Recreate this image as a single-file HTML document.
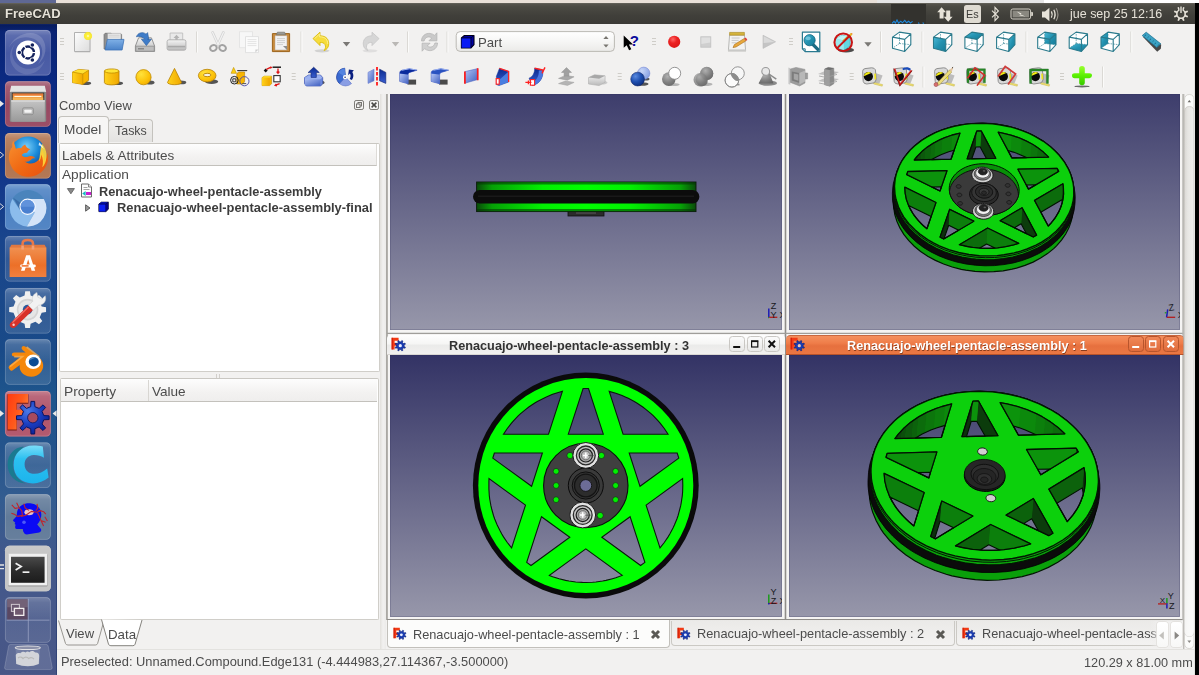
<!DOCTYPE html>
<html lang="es"><head><meta charset="utf-8"><title>FreeCAD</title>
<style>
*{box-sizing:border-box;margin:0;padding:0}
html,body{width:1199px;height:675px;overflow:hidden;background:#f2f1f0}
body{position:relative;font-family:"Liberation Sans","DejaVu Sans",sans-serif;font-size:13px;color:#4c4c4c}
.a{position:absolute}
.t{position:absolute;white-space:nowrap;line-height:1;transform-origin:0 0}
svg{position:absolute;overflow:visible}
#strip{left:0;top:0;width:1199px;height:4px;background:#e9e0d8}
#panel{left:0;top:3.4px;width:1195px;height:20.6px;background:linear-gradient(#6a685f 0,#54524b 6%,#4b4a43 18%,#403f3a 60%,#3b3a36 100%)}
#rblack{left:1195px;top:3.4px;width:4px;height:672px;background:#000}
#win{left:57px;top:24px;width:1138px;height:651px;background:#f2f1f0}

</style></head>
<body>
<div class="a" id="strip"><div class="a" style="left:0;top:0;width:56px;height:4px;background:#5f6894"></div><div class="a" style="left:877px;top:0;width:167px;height:4px;background:#e6e6e6"></div><div class="a" style="left:1044px;top:0;width:155px;height:4px;background:#fff"></div></div>
<div class="a" id="panel"></div>
<div class="a" id="rblack"></div>
<div class="a" id="win"></div>
<span class="t" style="left:5.26px;top:9.00px;font-size:11.9px;font-weight:700;color:#e6e2d8;transform:scaleX(1.0922);text-shadow:0 0.6px 0.8px #22211e">FreeCAD</span>
<div class="a" style="left:891px;top:4px;width:35px;height:20px;background:#33322e;"></div>
<svg style="left:891px;top:18px" width="36" height="6" viewBox="0 0 36 6"><path d="M1 5.400l2-2 1.400 1.600 1.600-3 1.600 3.200 2.200-2 1.600 1.600 2.400-2.400 1.800 2.400 2-1.600 1.800 1.800 2.200-1.600M27 4.800l1.400 0.600M31.600 4.800l1.400 0.600" fill="none" stroke="#1c8ae0" stroke-width="1.100"/></svg>
<svg style="left:936px;top:6px" width="18" height="17" viewBox="0 0 18 17"><path d="M5.600 1.200l4.400 5h-2.400v6.200h-4v-6.200h-2.400z" fill="#e6e2d8"/><path d="M12.200 15.800l-4.400-5h2.400v-6.200h4v6.200h2.400z" fill="#e6e2d8"/></svg>
<div class="a" style="left:963.8px;top:5.4px;width:17.4px;height:17.4px;background:#dfdbd2;border-radius:2.500px"></div>
<span class="t" style="left:965.93px;top:9.00px;font-size:11.8px;color:#3c3b37;transform:scaleX(0.9201);">Es</span>
<svg style="left:990px;top:6px" width="11" height="17" viewBox="0 0 11 17"><path d="M2 4.600l6.400 6.400-3.400 3.600v-13.200l3.400 3.600-6.400 6.400" fill="none" stroke="#e6e2d8" stroke-width="1.100"/></svg>
<svg style="left:1010px;top:8px" width="24" height="12" viewBox="0 0 24 12"><rect x="1" y="1" width="19.600" height="10" rx="1.800" fill="none" stroke="#d8d4ca" stroke-width="1"/><path d="M21.200 4h1q0.800 0 0.800 0.800v2.400q0 0.800-0.800 0.800h-1z" fill="#d8d4ca"/><rect x="2.600" y="2.600" width="16.400" height="6.800" fill="#8a8880"/><path d="M6.600 3.400l5 2.200-1.400 0.600 5.200 2.400-6.200-1.400 1.400-0.800z" fill="#f4f0e6"/></svg>
<svg style="left:1041px;top:6px" width="20" height="17" viewBox="0 0 20 17"><path d="M1 5.600h3l4.400-3.800v13.400l-4.400-3.800h-3z" fill="#e6e2d8"/><path d="M10.400 5.400q1.600 3.100 0 6.200M12.800 3.800q2.600 4.700 0 9.400" fill="none" stroke="#e6e2d8" stroke-width="1.300"/><path d="M15.200 2.200q3.400 6.300 0 12.600" fill="none" stroke="#9a968e" stroke-width="1.100"/></svg>
<span class="t" style="left:1070.11px;top:8.00px;font-size:12.4px;color:#e6e2d8;transform:scaleX(1.0075);">jue sep 25 12:16</span>
<svg style="left:1172.600px;top:6px" width="16" height="16" viewBox="0 0 16 16"><path d="M8.98 3.10L10.06 0.89L11.56 1.52L10.78 3.84L12.16 5.22L14.48 4.44L15.11 5.94L12.90 7.02L12.90 8.98L15.11 10.06L14.48 11.56L12.16 10.78L10.78 12.16L11.56 14.48L10.06 15.11L8.98 12.90L7.02 12.90L5.94 15.11L4.44 14.48L5.22 12.16L3.84 10.78L1.52 11.56L0.89 10.06L3.10 8.98L3.10 7.02L0.89 5.94L1.52 4.44L3.84 5.22L5.22 3.84L4.44 1.52L5.94 0.89L7.02 3.10Z" fill="#e6e2d8"/><circle cx="8" cy="8" r="3.400" fill="#45443e"/><path d="M8 0.400v7" stroke="#45443e" stroke-width="3"/><path d="M8 0.600v6.400" stroke="#e6e2d8" stroke-width="1.400"/></svg>
<svg style="left:0;top:24px;overflow:hidden" width="56.6" height="651" viewBox="0 24 56.6 651">
<defs><linearGradient id="lbg" gradientUnits="userSpaceOnUse" x1="0" y1="24" x2="0" y2="675"><stop offset="0" stop-color="#061a5c"/><stop offset="0.012" stop-color="#0a2474"/><stop offset="0.09" stop-color="#0b2a82"/><stop offset="0.17" stop-color="#0c3088"/><stop offset="0.25" stop-color="#13398a"/><stop offset="0.33" stop-color="#19458c"/><stop offset="0.42" stop-color="#1a488a"/><stop offset="0.5" stop-color="#194a88"/><stop offset="0.57" stop-color="#1e558c"/><stop offset="0.65" stop-color="#24548c"/><stop offset="0.73" stop-color="#335c90"/><stop offset="0.81" stop-color="#40588c"/><stop offset="0.89" stop-color="#46588a"/><stop offset="1" stop-color="#485686"/></linearGradient><linearGradient id="ltile" x1="0" y1="0" x2="0" y2="1"><stop offset="0" stop-color="#fff" stop-opacity="0.34"/><stop offset="0.12" stop-color="#fff" stop-opacity="0.2"/><stop offset="0.5" stop-color="#fff" stop-opacity="0.1"/><stop offset="1" stop-color="#fff" stop-opacity="0.13"/></linearGradient><linearGradient id="lsheen" x1="0" y1="0" x2="0" y2="1"><stop offset="0" stop-color="#fff" stop-opacity="0.4"/><stop offset="0.15" stop-color="#fff" stop-opacity="0.15"/><stop offset="0.5" stop-color="#fff" stop-opacity="0"/></linearGradient><radialGradient id="lffb" cx="0.45" cy="0.3" r="0.75"><stop offset="0" stop-color="#7ad0f8"/><stop offset="0.45" stop-color="#1a8ad8"/><stop offset="1" stop-color="#0a2a80"/></radialGradient><linearGradient id="lffo" x1="0" y1="0" x2="1" y2="1"><stop offset="0" stop-color="#f89030"/><stop offset="0.5" stop-color="#f06a14"/><stop offset="1" stop-color="#e85010"/></linearGradient><linearGradient id="lbag" x1="0" y1="0" x2="0" y2="1"><stop offset="0" stop-color="#f09050"/><stop offset="0.6" stop-color="#ec7028"/><stop offset="1" stop-color="#f08040"/></linearGradient><linearGradient id="lterm" x1="0" y1="0" x2="0" y2="1"><stop offset="0" stop-color="#4a4a4a"/><stop offset="0.5" stop-color="#2c2c2c"/><stop offset="1" stop-color="#1c1c1c"/></linearGradient><linearGradient id="lF" x1="0" y1="0" x2="1" y2="0.6"><stop offset="0" stop-color="#ff3a10"/><stop offset="0.6" stop-color="#ff5a1c"/><stop offset="1" stop-color="#ff8a40"/></linearGradient><radialGradient id="lgear" cx="0.35" cy="0.3" r="0.8"><stop offset="0" stop-color="#4a7ae8"/><stop offset="0.5" stop-color="#1a3ec0"/><stop offset="1" stop-color="#0a1c90"/></radialGradient><linearGradient id="lcab" x1="0" y1="0" x2="0" y2="1"><stop offset="0" stop-color="#c4c4c4"/><stop offset="1" stop-color="#999"/></linearGradient><linearGradient id="lC" x1="0" y1="0" x2="0" y2="1"><stop offset="0" stop-color="#7adcf8"/><stop offset="0.35" stop-color="#2cc0f0"/><stop offset="1" stop-color="#1cb4ec"/></linearGradient><filter id="lb" x="-20%" y="-20%" width="140%" height="140%"><feGaussianBlur stdDeviation="0.5"/></filter></defs>
<rect x="0" y="24" width="57" height="651" fill="url(#lbg)"/>
<rect x="56" y="24" width="1" height="651" fill="#0a2058" opacity="0.35"/>
<rect x="5" y="29.9" width="45.8" height="45.6" rx="4.5" fill="#34489a"/><rect x="5" y="29.9" width="45.8" height="45.6" rx="4.5" fill="url(#ltile)" opacity="1"/><rect x="5.4" y="30.3" width="45" height="44.8" rx="4.2" fill="none" stroke="#fff" stroke-opacity="0.22" stroke-width="0.8"/>
<g transform="translate(5,29.9)"><path d="M3 20c4-12 18-16 28-10 8 5 8 16 2 24 8-6 10-18 4-26C28-2 8 4 3 20z" fill="#fff" opacity="0.16"/><path d="M40 30c-6 10-20 12-28 4-6-6-6-14-2-20-8 8-6 22 4 28 10 6 22 0 26-12z" fill="#fff" opacity="0.12"/><circle cx="23" cy="22.6" r="12" fill="#fff"/><circle cx="23" cy="22.6" r="6" fill="none" stroke="#14225c" stroke-width="2.4"/><path d="M27 22.6L31 22.6" stroke="#fff" stroke-width="1.1"/><path d="M21 26.0641L19 29.5282" stroke="#fff" stroke-width="1.1"/><path d="M21 19.1359L19 15.6718" stroke="#fff" stroke-width="1.1"/><circle cx="14.3" cy="22.6" r="2.5" fill="#fff"/><circle cx="14.3" cy="22.6" r="1.8" fill="#14225c"/><circle cx="27.35" cy="15.0656" r="2.5" fill="#fff"/><circle cx="27.35" cy="15.0656" r="1.8" fill="#14225c"/><circle cx="27.35" cy="30.1344" r="2.5" fill="#fff"/><circle cx="27.35" cy="30.1344" r="1.8" fill="#14225c"/></g>
<rect x="5" y="81.2" width="45.8" height="45.6" rx="4.5" fill="#8c3450"/><rect x="5" y="81.2" width="45.8" height="45.6" rx="4.5" fill="url(#ltile)" opacity="1"/><rect x="5.4" y="81.6" width="45" height="44.8" rx="4.2" fill="none" stroke="#fff" stroke-opacity="0.22" stroke-width="0.8"/>
<g transform="translate(5,81.2)"><path d="M4.800 10.800l1.400-6.400h33.600l1.400 6.400z" fill="#e4e4e4"/><rect x="4.800" y="10.600" width="36.400" height="30" rx="1" fill="#8a8a8a"/><rect x="6.800" y="11.400" width="32.400" height="7.600" fill="#3a3a3a"/><rect x="7.800" y="12.400" width="30.400" height="6.600" fill="#f0983c"/><rect x="7.800" y="12.400" width="30.400" height="1.800" fill="#e87838"/><rect x="9.400" y="14.600" width="27" height="1.200" fill="#fff6e0"/><rect x="7.800" y="16.400" width="30.400" height="2.800" fill="#f4b458"/><path d="M6.200 19h33.600v20.600q0 1-1 1h-31.600q-1 0-1-1z" fill="url(#lcab)"/><path d="M6.200 19h33.600v1.400h-33.600z" fill="#d8d8d8"/><rect x="17.600" y="26.600" width="10.800" height="6.800" rx="1.400" fill="#b8b8b8" stroke="#8a8a8a" stroke-width="0.800"/><rect x="19.400" y="28.400" width="7.200" height="3.200" rx="0.600" fill="#f4f4f4"/></g>
<rect x="5" y="133" width="45.8" height="45.6" rx="4.5" fill="#a8643c"/><rect x="5" y="133" width="45.8" height="45.6" rx="4.5" fill="url(#ltile)" opacity="1"/><rect x="5.4" y="133.4" width="45" height="44.8" rx="4.2" fill="none" stroke="#fff" stroke-opacity="0.22" stroke-width="0.8"/>
<g transform="translate(5,133)"><g transform="translate(23.2,22.2) scale(1.08) translate(-24.2,-21.6)"><circle cx="24" cy="20.600" r="16.400" fill="url(#lffb)"/><path d="M10.400 8.200c-1 2-1.200 3.600-1 5.200-4 6-4.200 14 0.200 20.400 5.400 7.800 16.200 10 24.200 5.200 7-4.200 10.200-12.200 8.400-19.800-0.400 3.600-1.600 6-3.400 8 0.800-4.600-0.400-8.800-3-12 1.400 4.600 0.400 8.400-2.600 11.400-3.400 3.400-8.800 3.400-12.400 0.800 2.400 0.600 4.400 0 6-1.600 1.400-1.400 2.800-1.600 4-1.200-1.600-2.200-4-2.800-7-1.600-2.200 0.800-4.400 0.200-5.600-1.600 1.400-1.600 3.200-2.200 5-2 0.400-1.400 1.400-2.600 3-3.400-2.600-0.800-4.200-2.200-4.800-4.400-1.600 0.800-3 2-3.800 3.600-1.800-0.400-3.400-0.200-4.800 0.400-0.600-2.400-1.400-5-2.400-7.400z" fill="url(#lffo)"/><path d="M37 11c3.600 4 5 9.600 3.600 15.400-0.600 2.400-1.800 4.600-3.400 6.400 1.200-4.200 0.800-8.200-1-11.800 0 2.600-0.600 4.800-2 6.600 1-5.800 1-11.800 2.800-16.600z" fill="#ffd838" opacity="0.900"/><path d="M34.400 9.600c2 1.600 3.400 3.800 4.200 6.200-1.400-1.600-3-2.800-4.800-3.400z" fill="#fff" opacity="0.800"/></g></g>
<rect x="5" y="184.2" width="45.8" height="45.6" rx="4.5" fill="#3a74bc"/><rect x="5" y="184.2" width="45.8" height="45.6" rx="4.5" fill="url(#ltile)" opacity="1"/><rect x="5.4" y="184.6" width="45" height="44.8" rx="4.2" fill="none" stroke="#fff" stroke-opacity="0.22" stroke-width="0.8"/>
<g transform="translate(5,184.2)"><circle cx="23" cy="24" r="18.200" fill="#5a94cc"/><path d="M23 24l-15.600-9.200a18.200 18.200 0 0 1 31.400 0z" fill="#4a84bc"/><path d="M8 13.400l8.400 14.600 6.600-4z" fill="#3a6ca8"/><path d="M7.400 14.800a18.200 18.200 0 0 0 14.400 27.400l7.800-13.600-13.200-0.600z" fill="#8cbcec"/><path d="M21.800 42.200a18.200 18.200 0 0 0 17-27.400h-15.800l6.600 13.800z" fill="#d4e4f8"/><circle cx="22.600" cy="22.600" r="8.200" fill="#f4f8ff"/><circle cx="22.600" cy="22.600" r="7" fill="#4a80d0"/><path d="M15.600 22.600a7 7 0 0 1 14 0z" fill="#6a9ae0" opacity="0.700"/></g>
<rect x="5" y="236" width="45.8" height="45.6" rx="4.5" fill="url(#ltile)" opacity="1"/><rect x="5.4" y="236.4" width="45" height="44.8" rx="4.2" fill="none" stroke="#fff" stroke-opacity="0.22" stroke-width="0.8"/>
<g transform="translate(5,236)"><path d="M17.600 14.600v-7q0-3.600 5.200-3.600t5.200 3.600v7" fill="none" stroke="#e87848" stroke-width="2.600"/><path d="M4.600 12l1.800-3.200h33.200l1.800 3.200z" fill="#e07840"/><rect x="4.600" y="11.600" width="36.800" height="29.400" fill="url(#lbag)"/><path d="M17.600 13.600v-4M28 13.600v-4" stroke="#f0a078" stroke-width="2.600"/><path d="M16 34.800l5.200-15.600h3.800l5.200 15.600h-3.600l-3.400-11.600-3.600 11.600z" fill="#fff"/><rect x="15.200" y="28.400" width="15.600" height="3" rx="1.400" fill="#fff"/><rect x="16.600" y="29.200" width="7" height="1.400" fill="#f06014"/></g>
<rect x="5" y="288" width="45.8" height="45.6" rx="4.5" fill="url(#ltile)" opacity="1"/><rect x="5.4" y="288.4" width="45" height="44.8" rx="4.2" fill="none" stroke="#fff" stroke-opacity="0.22" stroke-width="0.8"/>
<g transform="translate(5,288)"><path d="M36.68 18.57L41.05 19.24L41.05 23.96L36.68 24.63L34.70 29.41L37.31 32.98L33.98 36.31L30.41 33.70L25.63 35.68L24.96 40.05L20.24 40.05L19.57 35.68L14.79 33.70L11.22 36.31L7.89 32.98L10.50 29.41L8.52 24.63L4.15 23.96L4.15 19.24L8.52 18.57L10.50 13.79L7.89 10.22L11.22 6.89L14.79 9.50L19.57 7.52L20.24 3.15L24.96 3.15L25.63 7.52L30.41 9.50L33.98 6.89L37.31 10.22L34.70 13.79Z" fill="#f0f0f0"/><circle cx="22.600" cy="21.600" r="10.800" fill="#d4d4d4"/><circle cx="22.600" cy="21.600" r="9.200" fill="#e6e6e6"/><circle cx="22.600" cy="21.600" r="4.800" fill="#2a5a9c"/><path d="M6 34.400l17.600-17.200 4.600 4.600-17.600 17.200q-2.600 2-5 0-2-2.400 0.400-4.600z" fill="#d83028"/><path d="M7.400 34.600l16-15.600" stroke="#f47068" stroke-width="1.200"/><circle cx="8.600" cy="36.800" r="1.200" fill="#f8d0d0"/><path d="M23.400 17.400l4.400-4.200c-1.400-3.600 0.400-7.400 4.200-8.800l0.800 4.800 4 1.800 3.400-3.200c1.800 4.600-1.400 9.600-6.600 9.400l-5.400 5z" fill="#f2f2f2" stroke="#c8c8c8" stroke-width="0.500"/></g>
<rect x="5" y="339.2" width="45.8" height="45.6" rx="4.5" fill="url(#ltile)" opacity="1"/><rect x="5.4" y="339.6" width="45" height="44.8" rx="4.2" fill="none" stroke="#fff" stroke-opacity="0.22" stroke-width="0.8"/>
<g transform="translate(5,339.2)"><path d="M4.200 29.600q-1.600-1.800 0.400-3.400l11.400-9h-6.800q-2.400-0.200-2.400-2t2.400-2h11.400l-3.200-2.600q-1.600-1.600-0.400-3 1.400-1.400 3.200-0.200l14 10.800c6.600 5.600 4.600 14.800-2.400 18-6.400 3-14.600 0.400-16.800-6.200-0.400-1.400-0.400-2.800-0.200-4.200l-7.400 5.400q-1.800 1.200-3.200-1.600z" fill="#f5870a"/><path d="M5 27.400l12.600-10h-8.400M21.600 7.800l12.600 9.800" stroke="#fbb050" stroke-width="1.600" fill="none" opacity="0.800"/><ellipse cx="28.200" cy="22.600" rx="7.800" ry="7.200" fill="#fff"/><ellipse cx="28.800" cy="22.600" rx="5" ry="4.600" fill="#0a4c94"/><path d="M24.400 21a5 4.600 0 0 1 6.600-2.600z" fill="#4a84c0"/></g>
<rect x="5" y="390.9" width="45.8" height="45.6" rx="4.5" fill="#a8425a"/><rect x="5" y="390.9" width="45.8" height="45.6" rx="4.5" fill="url(#ltile)" opacity="1"/><rect x="5.4" y="391.3" width="45" height="44.8" rx="4.2" fill="none" stroke="#fff" stroke-opacity="0.22" stroke-width="0.8"/>
<g transform="translate(5,390.9)"><path d="M2.400 3.400h21v9.400h-11.600v6.200h6.400v8.400h-6.400v12.200h-9.400z" fill="#7a1a10"/><path d="M2.800 3h20.200v8.800h-11.400v7h6.200v7.400h-6.200v12.400h-8.800z" fill="url(#lF)"/><path d="M38.80 24.70L44.10 24.95L44.10 28.65L38.80 28.90L37.06 33.10L40.63 37.01L38.01 39.63L34.10 36.06L29.90 37.80L29.65 43.10L25.95 43.10L25.70 37.80L21.50 36.06L17.59 39.63L14.97 37.01L18.54 33.10L16.80 28.90L11.50 28.65L11.50 24.95L16.80 24.70L18.54 20.50L14.97 16.59L17.59 13.97L21.50 17.54L25.70 15.80L25.95 10.50L29.65 10.50L29.90 15.80L34.10 17.54L38.01 13.97L40.63 16.59L37.06 20.50Z" fill="url(#lgear)" stroke="#0a1460" stroke-width="1"/><circle cx="27.800" cy="26.800" r="5.200" fill="#a84a5e" stroke="#0a1460" stroke-width="0.800"/></g>
<rect x="5" y="442.4" width="45.8" height="45.6" rx="4.5" fill="url(#ltile)" opacity="1"/><rect x="5.4" y="442.8" width="45" height="44.8" rx="4.2" fill="none" stroke="#fff" stroke-opacity="0.22" stroke-width="0.8"/>
<g transform="translate(5,442.4)"><path d="M21 41c-10.400 0-18.400-7.600-18.400-19.400 0-9.400 6.400-16.600 16-17.600l-3 4c-5 3-7.600 8-7.600 14 0 9.400 5 16 13 19z" fill="#1a7a90"/><path d="M37.800 4l1.200 11.400c-3.400-2-6.800-3-10.400-2.800-5.800 0.400-9 4.200-9 9.400 0 5.600 4 9.400 10 9.400 4.600 0 8.600-1.800 12.600-5.400l1.400 9.200c-4.600 3.800-10 5.800-15.600 5.800-11.600 0-19.400-7.400-19.400-18.400 0-11.400 8-19.400 19.800-19.400 3.400 0 6.600 0.200 9.400 0.800z" fill="url(#lC)"/></g>
<rect x="5" y="494.2" width="45.8" height="45.6" rx="4.5" fill="#506c8e"/><rect x="5" y="494.2" width="45.8" height="45.6" rx="4.5" fill="url(#ltile)" opacity="1"/><rect x="5.4" y="494.6" width="45" height="44.8" rx="4.2" fill="none" stroke="#fff" stroke-opacity="0.22" stroke-width="0.8"/>
<g transform="translate(5,494.2)"><path d="M12.200 17c2-6 8-8.800 14.400-7.600 6.600 1.200 10.400 6.200 9.600 12.600-0.400 3.400-2 6-4 8.200l3.800 4.600q1 2.600-1.800 3.400l-12.400 2q-2.600 0-3.600-2.800l-0.400-2.600h-6.200q-1.800-0.400-1.400-2.400l0.400-1.800-1-0.800 0.600-1.600-2-1.400q-0.400-1 0.600-1.800l2.800-3z" fill="#0a0af4"/><ellipse cx="24" cy="18" rx="4.600" ry="3" fill="#ffd8c0" opacity="0.900" filter="url(#lb)"/><path d="M16 22.400l4.800-1.400 5.600-3.800 5.400 0.800 4.800-1.600M11.600 8.600l2.400 4.800 2.800 3.200 0.600 4.600-4.800 1-2.600-1.800-3.600-1.400M6.800 10.800l3.200 3.400 3.600-0.600M18.800 9.400l1.400 4.400 3.800 2.400M32 9.600l0.800 4.400-2 2.600M33.400 16l5.400 1.600 2 2.400M32 17.400l2.400 5 1.600 4 4.600 1.600M39.800 22.600l2.600 4.200M36 26.400l2.600 5.400" fill="none" stroke="#c0242c" stroke-width="1.100" stroke-linejoin="round"/><circle cx="19" cy="28" r="1.800" fill="#6a7af8" opacity="0.700"/></g>
<rect x="5" y="545.8" width="45.8" height="45.6" rx="4.5" fill="#bdbdbd"/><rect x="5" y="545.8" width="45.8" height="45.6" rx="4.5" fill="url(#ltile)" opacity="1"/><rect x="5.4" y="546.2" width="45" height="44.8" rx="4.2" fill="none" stroke="#fff" stroke-opacity="0.22" stroke-width="0.8"/>
<g transform="translate(5,545.8)"><rect x="0" y="0" width="45.800" height="45.600" rx="4.500" fill="#c6c6c6" opacity="0.800"/><rect x="3" y="8.200" width="39.600" height="32.600" rx="1" fill="#9a9a9a"/><rect x="3.400" y="8" width="38.800" height="31.600" fill="#f0f0f0"/><rect x="6" y="11" width="33.600" height="26" fill="url(#lterm)"/><path d="M10.600 17.400l5.600 3.400-5.600 3.400" fill="none" stroke="#f0f0f0" stroke-width="1.700"/><path d="M17.600 26.400h6.800" stroke="#f0f0f0" stroke-width="1.700"/></g>
<rect x="5" y="597.2" width="45.8" height="45.6" rx="4.5" fill="url(#ltile)" opacity="0.8"/><rect x="5.4" y="597.6" width="45" height="44.8" rx="4.2" fill="none" stroke="#fff" stroke-opacity="0.22" stroke-width="0.8"/>
<g transform="translate(5,597.2)"><path d="M2.200 2h20.600v20.600h-20.600z" fill="#5a4862"/><path d="M2.200 2h20.600v8h-20.600z" fill="#8a7a8c" opacity="0.500"/><path d="M23.300 1.500v43M1.500 23h43" stroke="#b4bcd8" stroke-width="0.700" opacity="0.800"/><rect x="6.400" y="7.200" width="8" height="7" fill="#6a5870" stroke="#cfc8d0" stroke-width="1"/><rect x="9.400" y="11.200" width="9.400" height="7" fill="#705a70" stroke="#f4f0f0" stroke-width="1.300"/></g>
<path d="M10.600 644.400h35.600q1.400 0 2 1.600l4 21.600q0.200 2-1.800 2h-44q-2 0-1.800-2l4-21.600q0.600-1.600 2-1.600z" fill="#fff" fill-opacity="0.140" stroke="#fff" stroke-opacity="0.250" stroke-width="0.700"/><ellipse cx="27.800" cy="647.800" rx="12.600" ry="1.800" fill="#8a8fa8" stroke="#dcdce0" stroke-width="1.100"/><path d="M15.600 649l0.600 14.600q5 2.400 11.600 2.400t11.600-2.400l0.600-14.600z" fill="#fff" opacity="0.120"/><path d="M15.800 655c1-2 3-2.400 4.600-1.600 1-1.600 3.600-2 5.200-0.800 1-1.200 2.600-1.200 3.800-0.400 1.600-1.800 4.600-1.600 5.800 0.400 2.600-0.400 4.200 1.400 4 3.400l-0.400 8q-5 2.200-11 2.200t-11.600-2.200l-0.400-8z" fill="#e4e4e4" opacity="0.85" filter="url(#lb)"/><path d="M18 658c2-1.600 4-1 5 0.600 1.600-2 4.400-2 5.600 0 2-1.400 4-1 5.400 0.600" fill="none" stroke="#bababa" stroke-width="1.200" filter="url(#lb)"/>
<path d="M0 100.5l4 3.200-4 3.200z" fill="#e8e8e8"/>
<path d="M0 152l3.600 3-3.600 3" fill="none" stroke="#dcdcdc" stroke-width="1"/>
<path d="M0 203.6l3.600 3-3.600 3" fill="none" stroke="#dcdcdc" stroke-width="1"/>
<path d="M0 410.3l4 3.200-4 3.200z" fill="#e8e8e8"/>
<path d="M56.600 410.3l-4 3.200 4 3.200z" fill="#e8e8e8"/>
<path d="M0 565h4M0 568.600h4" stroke="#e4e4e4" stroke-width="1.400"/>
</svg>
<svg style="left:0;top:0" width="1199" height="94" viewBox="0 0 1199 94"><defs><linearGradient id="gpage" x1="0" y1="0" x2="1" y2="1"><stop offset="0" stop-color="#fdfdfd"/><stop offset="1" stop-color="#dcdcdc"/></linearGradient>
<radialGradient id="gglow"><stop offset="0" stop-color="#fffde0"/><stop offset="0.35" stop-color="#fff23a"/><stop offset="0.8" stop-color="#f6e628" stop-opacity="0.9"/><stop offset="1" stop-color="#f0e020" stop-opacity="0"/></radialGradient>
<linearGradient id="gblue" x1="0" y1="0" x2="0" y2="1"><stop offset="0" stop-color="#7fb0e6"/><stop offset="1" stop-color="#4a82c8"/></linearGradient>
<linearGradient id="ggray" x1="0" y1="0" x2="0" y2="1"><stop offset="0" stop-color="#f4f4f4"/><stop offset="1" stop-color="#b8b8b8"/></linearGradient>
<linearGradient id="gteal" x1="0" y1="0" x2="1" y2="1"><stop offset="0" stop-color="#4ab8d6"/><stop offset="0.5" stop-color="#2392b0"/><stop offset="1" stop-color="#167c98"/></linearGradient>
<radialGradient id="gyel" cx="0.35" cy="0.3" r="0.9"><stop offset="0" stop-color="#ffe23c"/><stop offset="0.6" stop-color="#fcc108"/><stop offset="1" stop-color="#e8a000"/></radialGradient>
<linearGradient id="gyl" x1="0" y1="0" x2="1" y2="0"><stop offset="0" stop-color="#ffd21c"/><stop offset="1" stop-color="#f0a800"/></linearGradient>
<radialGradient id="gred" cx="0.4" cy="0.3" r="0.8"><stop offset="0" stop-color="#f66"/><stop offset="0.4" stop-color="#ec2222"/><stop offset="1" stop-color="#d81414"/></radialGradient>
<radialGradient id="gbsph" cx="0.35" cy="0.3" r="0.8"><stop offset="0" stop-color="#5a8ae0"/><stop offset="0.5" stop-color="#1f4fb0"/><stop offset="1" stop-color="#0a2a78"/></radialGradient>
<radialGradient id="glsph" cx="0.35" cy="0.3" r="0.8"><stop offset="0" stop-color="#c8d6f8"/><stop offset="1" stop-color="#7f9ae0"/></radialGradient>
<radialGradient id="ggsph" cx="0.4" cy="0.3" r="0.8"><stop offset="0" stop-color="#b0b0b0"/><stop offset="0.6" stop-color="#7e7e7e"/><stop offset="1" stop-color="#666"/></radialGradient>
<linearGradient id="gbl2" x1="0" y1="0" x2="1" y2="1"><stop offset="0" stop-color="#b4c4f4"/><stop offset="1" stop-color="#3f5fc0"/></linearGradient>
<linearGradient id="gbl3" x1="0" y1="0" x2="0" y2="1"><stop offset="0" stop-color="#0a2a90"/><stop offset="1" stop-color="#3a5ed0"/></linearGradient>
<linearGradient id="ggrn" x1="0" y1="0" x2="0" y2="1"><stop offset="0" stop-color="#9aff30"/><stop offset="0.5" stop-color="#5af000"/><stop offset="1" stop-color="#38c800"/></linearGradient>
<filter id="blur1" x="-30%" y="-30%" width="160%" height="160%"><feGaussianBlur stdDeviation="0.7"/></filter>
<filter id="blur2" x="-50%" y="-100%" width="200%" height="300%"><feGaussianBlur stdDeviation="1.1"/></filter>
<linearGradient id="gcombo" x1="0" y1="0" x2="0" y2="1"><stop offset="0" stop-color="#ffffff"/><stop offset="0.5" stop-color="#f6f6f5"/><stop offset="1" stop-color="#ebeae8"/></linearGradient></defs>
<path d="M60 38.5h4M60 41.5h4M60 44.5h4" stroke="#cfcdc8" stroke-width="1"/>
<g transform="translate(82.5,42)"><path d="M-8 -9.5h15.5v19.5h-15.5z" fill="#b9b9b9" opacity="0.5" transform="translate(0.3,0.6)"/><path d="M-8 -9.5h15.5v19h-15.5z" fill="url(#gpage)" stroke="#a9a9a9" stroke-width="0.9"/><circle cx="5.5" cy="-6" r="4.6" fill="url(#gglow)"/></g>
<g transform="translate(113.7,42)"><path d="M-9.6 -7.5l1-1.2h6l1 1.2h9.5v14.5h-17.5z" fill="#8f8f8f" stroke="#6f6f6f" stroke-width="0.8"/><path d="M-6 -8.6h13.2v10h-13.2z" fill="#eee" stroke="#aaa" stroke-width="0.6"/><path d="M-5 -6.8h11M-5 -5h11" stroke="#c4c4c4" stroke-width="0.8"/><path d="M-8.6 8l2.3-10.6h16.6L8.4 8z" fill="url(#gblue)" stroke="#3d73b8" stroke-width="0.8"/></g>
<g transform="translate(145,42)"><path d="M-9.6 9.4v-5.4l3.2-8.2h12.8l3.2 8.2v5.4z" fill="url(#ggray)" stroke="#8a8a8a" stroke-width="0.9"/><path d="M-9.2 4.2h18.4v5h-18.4z" fill="#bdbdbd" stroke="#8a8a8a" stroke-width="0.7"/><path d="M-7 6.8h6" stroke="#7a7a7a" stroke-width="1.2"/><path d="M-8.6 -5.2c1.2-4 6.4-5.6 9.6-2.6l1.6-1.6 1.2 6.6h-1.2l3.8 0-5 6.4-5-6.4h3.2c-1.6-2.6-5.4-3.4-8.2-2.4z" fill="#3f7cc8" stroke="#2a5c9c" stroke-width="0.6" stroke-linejoin="round"/></g>
<g transform="translate(176.5,42)" opacity="0.95"><path d="M-6.4 -9h12.6v8h-12.6z" fill="#e9e9e9" stroke="#b5b5b5" stroke-width="0.8"/><path d="M0 -7.2l3 3.2h-1.8v2.6h-2.4v-2.6h-1.8z" fill="#b0b0b0"/><path d="M-9.4 -0.5q0-1.7 1.8-1.7h15.2q1.8 0 1.8 1.7v7q0 1.7-1.8 1.7h-15.2q-1.8 0-1.8-1.7z" fill="url(#ggray)" stroke="#a9a9a9" stroke-width="0.9"/><path d="M-8.6 4.6h17.2" stroke="#a6a6a6" stroke-width="1.6"/></g>
<path d="M196.5 31.5v21" stroke="#dbd9d5" stroke-width="1"/><path d="M197.5 31.5v21" stroke="#fbfbfa" stroke-width="1"/>
<g transform="translate(218,42)"><path d="M-5.4 -9.6l5.6 12.4M5.4 -9.6l-5.6 12.4" stroke="#d2d2d2" stroke-width="2.6" stroke-linecap="round"/><path d="M-5.4 -9.6l5.6 12.4M5.4 -9.6l-5.6 12.4" stroke="#f2f2f2" stroke-width="1.2" stroke-linecap="round"/><ellipse cx="-4.6" cy="6" rx="3.4" ry="2.9" fill="none" stroke="#a2a2a2" stroke-width="2" transform="rotate(-25 -4.6 6)"/><ellipse cx="4.6" cy="6" rx="3.4" ry="2.9" fill="none" stroke="#a2a2a2" stroke-width="2" transform="rotate(25 4.6 6)"/></g>
<g transform="translate(250,42)"><path d="M-10.5 -10.3h13v16h-13z" fill="#f7f7f7" stroke="#e1e1e1" stroke-width="0.8"/><path d="M-4.5 -5.4h13v16h-13z" fill="#fbfbfb" stroke="#dcdcdc" stroke-width="0.8"/><path d="M-2.5 -2.4h9M-2.5 -0.4h9M-2.5 1.6h9M-2.5 3.6h9" stroke="#e4e4e4" stroke-width="1"/><path d="M5.4 10.6v-3h3.1z" fill="#cfcfcf"/></g>
<g transform="translate(281,42)"><path d="M-8.6 -8.4h17.2v18h-17.2z" fill="#c88a3c" stroke="#9c641c" stroke-width="1"/><path d="M-6 -6.4h12v14.4h-12z" fill="#f2f2f2" stroke="#b0a090" stroke-width="0.5"/><path d="M-4 -3.4h8M-4 -1.4h8M-4 0.6h8M-4 2.6h6" stroke="#d0d0d0" stroke-width="1"/><path d="M6 8v-4h-4z" fill="#8e8e8e"/><path d="M-3.6 -9.8h7.2l1 2.6h-9.2z" fill="#9a9a96" stroke="#77756f" stroke-width="0.7"/></g>
<path d="M301 31.5v21" stroke="#dbd9d5" stroke-width="1"/><path d="M302 31.5v21" stroke="#fbfbfa" stroke-width="1"/>
<g transform="translate(321,42)"><ellipse cx="1" cy="8.8" rx="7.5" ry="1.6" fill="#999" opacity="0.35" filter="url(#blur1)"/><path d="M-8 -3.4l7-6.4v3.6c6.4 0 9.4 4 8.6 9.4-0.4 2.6-2.2 4.6-4.6 5.4 1.6-2 2-4.2 1-6-1-1.8-2.8-2.2-5-2.2v3.2z" fill="#f6dc3c" stroke="#d8b800" stroke-width="0.8" stroke-linejoin="round"/><path d="M-6.4 -3.4l5-4.6v2.8c5.6 0 8.2 2.8 8 7" fill="none" stroke="#fff6a8" stroke-width="0.9" opacity="0.8"/></g>
<path d="M342.8 42h7.4l-3.7 4.6z" fill="#7a7875"/>
<g transform="translate(371,42)"><ellipse cx="-1" cy="8.8" rx="7.5" ry="1.6" fill="#aaa" opacity="0.25" filter="url(#blur1)"/><path d="M8 -3.4l-7-6.4v3.6c-6.4 0-9.4 4-8.6 9.4 0.4 2.6 2.2 4.6 4.6 5.4-1.6-2-2-4.2-1-6 1-1.8 2.8-2.2 5-2.2v3.2z" fill="#d6d6d6" stroke="#c6c6c6" stroke-width="0.8" stroke-linejoin="round"/></g>
<path d="M391.8 42h7.4l-3.7 4.6z" fill="#bab8b5"/>
<path d="M407.5 31.5v21" stroke="#dbd9d5" stroke-width="1"/><path d="M408.5 31.5v21" stroke="#fbfbfa" stroke-width="1"/>
<g transform="translate(429.5,42)"><path d="M-8 -1c0-5 4-8 8.4-7.6 2 0.2 3.4 1 4.6 2l2.4-2.6v8h-8l2.8-2.8c-2.6-2-6.6-1.2-7.6 3z" fill="#c9c9c9" stroke="#b2b2b2" stroke-width="0.7"/><path d="M8 1c0 5-4 8-8.4 7.6-2-0.2-3.4-1-4.6-2l-2.4 2.6v-8h8l-2.8 2.8c2.6 2 6.6 1.2 7.6-3z" fill="#cfcfcf" stroke="#b2b2b2" stroke-width="0.7"/></g>
<path d="M447 31.5v21" stroke="#dbd9d5" stroke-width="1"/><path d="M448 31.5v21" stroke="#fbfbfa" stroke-width="1"/>
<rect x="456.2" y="31.6" width="158.2" height="19.8" rx="4" fill="url(#gcombo)" stroke="#b4b2ad" stroke-width="0.9"/>
<g transform="translate(468,41.5)"><path d="M-6.6 -3.6l3-2.4h9.6v9.2l-3 3.2h-9.6z" fill="#0000a0" stroke="#000018" stroke-width="1.1" stroke-linejoin="round"/><path d="M-6.4 -3.4h9.2v9.6h-9.2z" fill="#0a1cf4"/><path d="M-6.4 -3.6h9.4l2.8-2.3M3 -3.6v9.8" fill="none" stroke="#000028" stroke-width="0.9"/></g>
<path d="M603.4 39l2.6-3 2.6 3z" fill="#77756f"/><path d="M603.4 44.6l2.6 3 2.6-3z" fill="#77756f"/>
<g transform="translate(631.5,42)"><path d="M-7.8 -6.6v12.4l3-2.6 2.4 5 2.2-1-2.4-4.8h4.2z" fill="#000"/><text x="-1.8" y="3.6" font-family="Liberation Sans,sans-serif" font-weight="700" font-size="15" fill="#0a0a9c">?</text></g>
<path d="M652 38.5h4M652 41.5h4M652 44.5h4" stroke="#cfcdc8" stroke-width="1"/>
<g transform="translate(674.2,41.8)"><circle r="6.1" fill="url(#gred)"/></g>
<g transform="translate(705.8,42)"><rect x="-5" y="-5.2" width="10" height="10.4" fill="#cfcfcf" stroke="#c0c0c0" stroke-width="0.8"/><path d="M-4.4 -4.6h8.8v5l-8.8 1.6z" fill="#e0e0e0"/></g>
<g transform="translate(737,42)"><path d="M-8.6 8.6l1.2-15.6h14.8l1.2 15.6z" fill="#f3f3f2" stroke="#a8a8a6" stroke-width="0.8"/><path d="M-9 7.4h18v2.2h-18z" fill="#c9c9c7"/><path d="M-7.4 -9.6h14.8v2.8h-14.8z" fill="#d4b43c" stroke="#a8861c" stroke-width="0.6"/><path d="M-5.4 -4h8M-5.4 -1.6h7M-5.4 0.8h5" stroke="#c2c2c2" stroke-width="0.9"/><path d="M-2.6 2.6l10-6.2 1.6 2.4-10 6.2-3 0.6z" fill="#e8a83c" stroke="#a86c14" stroke-width="0.6"/><path d="M7.4 -3.6l1.4-0.9 1.6 2.4-1.4 0.9z" fill="#e03a3a"/></g>
<g transform="translate(769,42)"><path d="M-6 -6.8l12.6 6.6-12.6 6.6z" fill="#c4c4c4" stroke="#bcbcbc" stroke-width="0.6"/><path d="M-5.4 -5.8l11 5.8-11 1z" fill="#dadada"/></g>
<path d="M789 38.5h4M789 41.5h4M789 44.5h4" stroke="#cfcdc8" stroke-width="1"/>
<g transform="translate(811.2,42)"><path d="M-8.8 -9.8h17.4v19.4h-14.6l-2.8-2.8z" fill="#fff" stroke="#2a7a90" stroke-width="1.2" stroke-linejoin="round"/><path d="M-8.8 6.8h2.8v2.8" fill="none" stroke="#2a7a90" stroke-width="1"/><path d="M1.6 2.4l5 5" stroke="#1c6c84" stroke-width="3.4" stroke-linecap="round"/><circle cx="-1.6" cy="-1.8" r="5.6" fill="url(#gteal)" stroke="#14647c" stroke-width="0.8"/><ellipse cx="-3" cy="-3.6" rx="2.6" ry="1.8" fill="#8ad4e8" opacity="0.7"/></g>
<g transform="translate(843,42)"><ellipse cx="3" cy="8" rx="8" ry="2.4" fill="#222" opacity="0.8"/><path d="M-7 -3.4l6-3.4 8.2 1.8v9l-6.4 4.6-7.8-2.6z" fill="#62d8e0" stroke="#2aa8b4" stroke-width="0.6"/><path d="M-7 -3.4l7.8 2v9.4l-7.8-2.6z" fill="#9ae8ec"/><path d="M-7 -3.4l6-3.4 8.2 1.8-6.4 3.6z" fill="#c0f2f4"/><path d="M-0.4 -1.6l8.2-7 1.2 1.4-8.2 7z" fill="#f0d020" stroke="#b89810" stroke-width="0.4"/><circle cx="8.6" cy="-8.2" r="0.9" fill="#f09020"/><circle cx="0.2" cy="0.2" r="8.8" fill="none" stroke="#c81414" stroke-width="2"/><path d="M-6 6.4l12.4-12.4" stroke="#c81414" stroke-width="2"/></g>
<path d="M864.3 42.2h7.4l-3.7 4.6z" fill="#7a7875"/>
<path d="M880.5 31.5v21" stroke="#dbd9d5" stroke-width="1"/><path d="M881.5 31.5v21" stroke="#fbfbfa" stroke-width="1"/>
<g transform="translate(901.3,42)"><path d="M-8.8 -4.9L-1.8 -9.9L9.5 -8.1L9.5 2.7L3.4 9.5L-8.8 6.2Z" fill="#fff"/><path d="M-1.8 1.5L-1.8 -9.9M-1.8 1.5L-8.8 6.2M-1.8 1.5L9.5 2.7" stroke="#3a8898" stroke-width="0.7" stroke-dasharray="1.6 1" fill="none"/><path d="M-8.8 -4.9L3.4 -2.6L3.4 9.5L-8.8 6.2ZM-8.8 -4.9L-1.8 -9.9L9.5 -8.1L3.4 -2.6ZM3.4 -2.6L9.5 -8.1L9.5 2.7L3.4 9.5Z" fill="none" stroke="#2a7a8c" stroke-width="1.1" stroke-linejoin="round"/></g>
<path d="M922 31.5v21" stroke="#dbd9d5" stroke-width="1"/><path d="M923 31.5v21" stroke="#fbfbfa" stroke-width="1"/>
<g transform="translate(942.3,42)"><path d="M-8.8 -4.9L-1.8 -9.9L9.5 -8.1L9.5 2.7L3.4 9.5L-8.8 6.2Z" fill="#fff"/><path d="M-1.8 1.5L-1.8 -9.9M-1.8 1.5L-8.8 6.2M-1.8 1.5L9.5 2.7" stroke="#3a8898" stroke-width="0.7" stroke-dasharray="1.6 1" fill="none"/><path d="M-8.8 -4.9L3.4 -2.6L3.4 9.5L-8.8 6.2Z" fill="url(#gteal)"/><path d="M-8.8 -4.9L3.4 -2.6L3.4 9.5L-8.8 6.2ZM-8.8 -4.9L-1.8 -9.9L9.5 -8.1L3.4 -2.6ZM3.4 -2.6L9.5 -8.1L9.5 2.7L3.4 9.5Z" fill="none" stroke="#2a7a8c" stroke-width="1.1" stroke-linejoin="round"/></g>
<g transform="translate(973.7,42)"><path d="M-8.8 -4.9L-1.8 -9.9L9.5 -8.1L9.5 2.7L3.4 9.5L-8.8 6.2Z" fill="#fff"/><path d="M-1.8 1.5L-1.8 -9.9M-1.8 1.5L-8.8 6.2M-1.8 1.5L9.5 2.7" stroke="#3a8898" stroke-width="0.7" stroke-dasharray="1.6 1" fill="none"/><path d="M-8.8 -4.9L-1.8 -9.9L9.5 -8.1L3.4 -2.6Z" fill="url(#gteal)"/><path d="M-8.8 -4.9L3.4 -2.6L3.4 9.5L-8.8 6.2ZM-8.8 -4.9L-1.8 -9.9L9.5 -8.1L3.4 -2.6ZM3.4 -2.6L9.5 -8.1L9.5 2.7L3.4 9.5Z" fill="none" stroke="#2a7a8c" stroke-width="1.1" stroke-linejoin="round"/></g>
<g transform="translate(1005.4,42)"><path d="M-8.8 -4.9L-1.8 -9.9L9.5 -8.1L9.5 2.7L3.4 9.5L-8.8 6.2Z" fill="#fff"/><path d="M-1.8 1.5L-1.8 -9.9M-1.8 1.5L-8.8 6.2M-1.8 1.5L9.5 2.7" stroke="#3a8898" stroke-width="0.7" stroke-dasharray="1.6 1" fill="none"/><path d="M3.4 -2.6L9.5 -8.1L9.5 2.7L3.4 9.5Z" fill="url(#gteal)"/><path d="M-8.8 -4.9L3.4 -2.6L3.4 9.5L-8.8 6.2ZM-8.8 -4.9L-1.8 -9.9L9.5 -8.1L3.4 -2.6ZM3.4 -2.6L9.5 -8.1L9.5 2.7L3.4 9.5Z" fill="none" stroke="#2a7a8c" stroke-width="1.1" stroke-linejoin="round"/></g>
<path d="M1026 31.5v21" stroke="#dbd9d5" stroke-width="1"/><path d="M1027 31.5v21" stroke="#fbfbfa" stroke-width="1"/>
<g transform="translate(1046.5,42)"><path d="M-8.8 -4.9L-1.8 -9.9L9.5 -8.1L9.5 2.7L3.4 9.5L-8.8 6.2Z" fill="#fff"/><path d="M-1.8 -9.9L9.5 -8.1L9.5 2.7L-1.8 1.5Z" fill="url(#gteal)"/><path d="M-1.8 1.5L-1.8 -9.9M-1.8 1.5L-8.8 6.2M-1.8 1.5L9.5 2.7" stroke="#3a8898" stroke-width="0.7" stroke-dasharray="1.6 1" fill="none"/><path d="M-8.8 -4.9L3.4 -2.6L3.4 9.5L-8.8 6.2ZM-8.8 -4.9L-1.8 -9.9L9.5 -8.1L3.4 -2.6ZM3.4 -2.6L9.5 -8.1L9.5 2.7L3.4 9.5Z" fill="none" stroke="#2a7a8c" stroke-width="1.1" stroke-linejoin="round"/></g>
<g transform="translate(1078,42)"><path d="M-8.8 -4.9L-1.8 -9.9L9.5 -8.1L9.5 2.7L3.4 9.5L-8.8 6.2Z" fill="#fff"/><path d="M-8.8 6.2L3.4 9.5L9.5 2.7L-1.8 1.5Z" fill="url(#gteal)"/><path d="M-1.8 1.5L-1.8 -9.9M-1.8 1.5L-8.8 6.2M-1.8 1.5L9.5 2.7" stroke="#3a8898" stroke-width="0.7" stroke-dasharray="1.6 1" fill="none"/><path d="M-8.8 -4.9L3.4 -2.6L3.4 9.5L-8.8 6.2ZM-8.8 -4.9L-1.8 -9.9L9.5 -8.1L3.4 -2.6ZM3.4 -2.6L9.5 -8.1L9.5 2.7L3.4 9.5Z" fill="none" stroke="#2a7a8c" stroke-width="1.1" stroke-linejoin="round"/></g>
<g transform="translate(1109.8,42)"><path d="M-8.8 -4.9L-1.8 -9.9L9.5 -8.1L9.5 2.7L3.4 9.5L-8.8 6.2Z" fill="#fff"/><path d="M-8.8 -4.9L-1.8 -9.9L-1.8 1.5L-8.8 6.2Z" fill="url(#gteal)"/><path d="M-1.8 1.5L-1.8 -9.9M-1.8 1.5L-8.8 6.2M-1.8 1.5L9.5 2.7" stroke="#3a8898" stroke-width="0.7" stroke-dasharray="1.6 1" fill="none"/><path d="M-8.8 -4.9L3.4 -2.6L3.4 9.5L-8.8 6.2ZM-8.8 -4.9L-1.8 -9.9L9.5 -8.1L3.4 -2.6ZM3.4 -2.6L9.5 -8.1L9.5 2.7L3.4 9.5Z" fill="none" stroke="#2a7a8c" stroke-width="1.1" stroke-linejoin="round"/></g>
<path d="M1130.8 31.5v21" stroke="#dbd9d5" stroke-width="1"/><path d="M1131.8 31.5v21" stroke="#fbfbfa" stroke-width="1"/>
<g transform="translate(1151.6,42)"><path d="M-8.6 -5l4-3.6 14.2 11.4-0.4 4-3.6 3z" fill="#2a2a2a" opacity="0.85"/><path d="M-9.4 -6.4l4-3.4 14.6 11.6-4 3.6z" fill="#3aa2c4" stroke="#1c7090" stroke-width="0.7"/><path d="M-5.6 -7.2l-1.6 1.4M-3 -5.2l-1 0.9M-0.6 -3.2l-1.6 1.4M2 -1.2l-1 0.9M4.4 0.8l-1.6 1.4M7 2.8l-1 0.9" stroke="#0c4c68" stroke-width="0.7"/></g>
<path d="M60 73.5h4M60 76.5h4M60 79.5h4" stroke="#cfcdc8" stroke-width="1"/>
<g transform="translate(81.4,77)"><ellipse cx="4.6" cy="6.2" rx="5.2" ry="1.8" fill="#3a3a3a" opacity="0.85"/><path d="M-8.9 -4.9l6.2-2.7 9.9 0.9v10l-5.8 4.1-10.3-1.8z" fill="#f8b400" stroke="#b88000" stroke-width="0.8" stroke-linejoin="round"/><path d="M-8.9 -4.9l10.3 1.8v10.5l-10.3-1.8z" fill="url(#gyl)"/><path d="M-8.9 -4.9l6.2-2.7 9.9 0.9-5.8 3.6z" fill="#ffe030"/><path d="M-8.9 -4.9l10.3 1.8 5.8-3.6M1.4 -3.1v10.5" fill="none" stroke="#c08c00" stroke-width="0.7"/></g>
<g transform="translate(113.3,77)"><ellipse cx="4.6" cy="6.2" rx="5.2" ry="1.8" fill="#3a3a3a" opacity="0.85"/><path d="M-8.9 -6v11.6a7.3 2.3 0 0 0 14.6 0v-11.6z" fill="url(#gyl)" stroke="#b88000" stroke-width="0.8"/><ellipse cx="-1.6" cy="-6" rx="7.3" ry="2.1" fill="#ffe434" stroke="#c08c00" stroke-width="0.8"/></g>
<g transform="translate(143.5,77)"><ellipse cx="6.4" cy="5.6" rx="4.6" ry="2" fill="#3a3a3a" opacity="0.85"/><circle cx="0" cy="0.2" r="7.6" fill="url(#gyel)" stroke="#c08c00" stroke-width="0.8"/></g>
<g transform="translate(174.5,77)"><ellipse cx="6.4" cy="5.4" rx="5.4" ry="1.9" fill="#3a3a3a" opacity="0.85"/><path d="M0 -8.6l7 14a7 2.3 0 0 1-14 0z" fill="url(#gyl)" stroke="#b88000" stroke-width="0.8" stroke-linejoin="round"/></g>
<g transform="translate(208,77)"><ellipse cx="3.6" cy="4.6" rx="6.6" ry="2.3" fill="#3a3a3a" opacity="0.85"/><ellipse cx="-0.8" cy="-1.4" rx="8.8" ry="6.3" fill="url(#gyel)" stroke="#b88000" stroke-width="0.8"/><ellipse cx="-0.8" cy="-2" rx="3.8" ry="1.7" fill="#f4f0e4" stroke="#b88000" stroke-width="0.9"/></g>
<g transform="translate(239,77)"><path d="M-5.4 -9.6l2.9 5.9h-5.4z" fill="#fcd010" stroke="#c09000" stroke-width="0.6"/><path d="M-1.8 -6.4h10" stroke="#333" stroke-width="1.1"/><path d="M-2.2 -3.4l2-1.6h5.8v9.4l-1.6 2.6h-6.2z" fill="#f8b400" stroke="#b88000" stroke-width="0.6"/><circle cx="-4.6" cy="3.2" r="3.8" fill="none" stroke="#222" stroke-width="1"/><path d="M-6.2 1.8h3v3h-3z" fill="none" stroke="#222" stroke-width="0.9"/><circle cx="5.4" cy="4.2" r="4.6" fill="none" stroke="#4a4aa8" stroke-width="0.9"/><path d="M3.2 6.6h4" stroke="#555" stroke-width="1"/></g>
<g transform="translate(271,77)"><path d="M-9 0.6l2.4-1.4h7.2v7.6l-2 1.8h-7.6z" fill="#f8b400" stroke="#c09000" stroke-width="0.6"/><path d="M-9 0.6h7.6v8h-7.6z" fill="url(#gyl)"/><path d="M-9 0.6l2.4-1.4h7.2l-2 1.4z" fill="#ffe030"/><path d="M1.6 -9.8h8.4" stroke="#111" stroke-width="1.4"/><path d="M-7.3 -6.6l2-2 2 2-2 2z" fill="#111"/><rect x="2.8" y="-1.4" width="6.4" height="6.2" fill="#fff" stroke="#333" stroke-width="1.1"/><path d="M-4.6 -7.6l4.6-2.2M-0.6 -10.4l1 1-1.6 0.6M7 -8.4v4M5.6 -5.4l1.4 1.6 1.4-1.6M8.6 6.6l-4 1.6M5.4 7l-1.2 1.4 1.8 0.4" stroke="#e01414" stroke-width="1.3" fill="none"/></g>
<path d="M291.7 73.5h4M291.7 76.5h4M291.7 79.5h4" stroke="#cfcdc8" stroke-width="1"/>
<g transform="translate(313.5,77)"><ellipse cx="6" cy="5.4" rx="5" ry="2" fill="#3a3a3a" opacity="0.85"/><path d="M-9 0.6l4-2.6h12l2.2 2.6v6l-2 2.4h-14.4l-1.8-2.4z" fill="#6a86dc" stroke="#3a52b0" stroke-width="0.7"/><path d="M-8.6 2h15.4v6.6h-15.4z" fill="url(#gbl2)" opacity="0.9"/><path d="M-8.8 0.8l4-2.6h11.6l2 2.6-2 1.4h-15.4z" fill="#9ab0f0"/><path d="M0.2 -9.8l5.6 5.4h-3v4.8h-5.2v-4.8h-3z" fill="url(#gbl3)" stroke="#0a1f70" stroke-width="0.6"/></g>
<g transform="translate(345.5,77)"><path d="M0 0l-5.8 6.8a8.9 8.9 0 0 1 5-15.6z" fill="#3a6ad0" stroke="#1a3a9c" stroke-width="0.7"/><path d="M0 0l-5.8 6.8a8.9 8.9 0 0 0 11.8-0.2z" fill="#8a9ee4" stroke="#5a70c8" stroke-width="0.6"/><path d="M0 0l-0.8-8.8q-4.4 0.6-6.4 4.4z" fill="#5a8ae4" opacity="0.8"/><circle cx="-0.4" cy="0.2" r="2.1" fill="#fff"/><circle cx="-0.4" cy="0.2" r="0.8" fill="#1a2a70"/><path d="M3.4 -7.4l5 0.6-1.6 1.8c1.6 2.6 1.4 5.6-0.4 8l-2.2-1c1.2-2 1.2-3.8 0.2-5.4l-1.8 1.6z" fill="#0a1f80"/></g>
<g transform="translate(377,77)"><path d="M-9 -4.6l6-3.2v11.6l-6 2.6z" fill="url(#gbl2)" stroke="#6a7ed0" stroke-width="0.6"/><path d="M2.6 -7.8l6.2 3.2v11l-6.2-2.6z" fill="url(#gbl3)" stroke="#0a1f70" stroke-width="0.6"/><path d="M0 -10v18.6" stroke="#ff1a1a" stroke-width="1.8" stroke-dasharray="3.6 1.4"/></g>
<g transform="translate(408.5,77)"><path d="M-1 2.6h8.6v5h-8.6z" fill="#4a4a4a"/><path d="M-8.8 -4.2q0-2 2-2.4l7.6-1.6 7.8 1.4-7.4 2.2q-1.6 0.6-1.6 2.4v9l-8.4-2.4z" fill="#6a86dc" stroke="#4a62c0" stroke-width="0.7" stroke-linejoin="round"/><path d="M-8.6 -3.4l8.4 1.2v9l-8.4-2.4z" fill="url(#gbl2)"/><path d="M-8.6 -4.4q0.2-1.8 2-2.2l7.6-1.6 7.4 1.4-7.4 2.2q-1.4 0.4-1.6 2.2l-8-1z" fill="#0a2a9c"/><path d="M-6.4 -6.8l7.2-1.4 7 1.2" fill="none" stroke="#9ab0f0" stroke-width="1"/></g>
<g transform="translate(440,77)"><path d="M-1 2.6h8.6v5h-8.6z" fill="#4a4a4a"/><path d="M-8.8 -4.2q0-2 2-2.4l7.6-1.6 7.8 1.4-7.4 2.2q-1.6 0.6-1.6 2.4v9l-8.4-2.4z" fill="#6a86dc" stroke="#4a62c0" stroke-width="0.7" stroke-linejoin="round"/><path d="M-8.6 -3.4l8.4 1.2v9l-8.4-2.4z" fill="url(#gbl2)"/><path d="M-8.6 -4.4q0.2-1.8 2-2.2l7.6-1.6 7.4 1.4-7.4 2.2q-1.4 0.4-1.6 2.2l-8-1z" fill="#2a52c0"/><path d="M-6.4 -6.8l7.2-1.4 7 1.2" fill="none" stroke="#9ab0f0" stroke-width="1"/></g>
<g transform="translate(471.5,77)"><path d="M-6.6 -5.4l12.8-3v11l-12.8 3.6z" fill="url(#gbl2)" stroke="#4a62c0" stroke-width="0.5"/><path d="M-6.6 -5.6v12.4M6.2 -8.8v12" stroke="#ff1a1a" stroke-width="1.7"/></g>
<g transform="translate(503,77)"><path d="M-3.6 -8.6l9.2 3v10.6l-9.6 3.6-2.6-1v-8.4z" fill="url(#gbl3)" stroke="#1a3a9c" stroke-width="0.5"/><path d="M-4 8.6l9.6-3.6v-10.6l-9 8z" fill="#4a7ee0"/><path d="M-3.6 -8.6l9.2 3v10.6" fill="none" stroke="#ff2020" stroke-width="1.3"/><rect x="-6.8" y="1.6" width="3" height="5.6" fill="#fff" stroke="#ff2020" stroke-width="1.1"/></g>
<g transform="translate(535,77)"><path d="M-0.4 -8.8l8.2 1.8c0.8 8-3 13.6-10.4 15.6l-3.4-7.4c3.6-1.6 5.8-5.2 5.6-10z" fill="url(#gbl3)" stroke="#1a3a9c" stroke-width="0.5"/><path d="M-2.6 8.6c7.4-2 11.2-7.600 10.400-15.600l-4 0.400c0.400 6-2.600 10.400-7.600 12.400z" fill="#4a76e0"/><path d="M-0.400 -8.800l8.200 1.800M7 -3.600l3-6" stroke="#ff2020" stroke-width="1.400" fill="none"/><rect x="-4.600" y="2.600" width="4.200" height="5.600" fill="#fff" stroke="#ff2020" stroke-width="1.100"/><path d="M-9.600 5.400h6M-6.600 3.600v3.600" stroke="#ff2020" stroke-width="1.300"/></g>
<g transform="translate(566.5,77)"><path d="M-8 1.400l7-3 8.600 1.400-6.600 3.400z" fill="#a8a8a8" stroke="#989898" stroke-width="0.500"/><path d="M-8 6.600l7-2.600 8.600 1.400-6.600 3z" fill="#b4b4b4" stroke="#a0a0a0" stroke-width="0.500"/><path d="M0 -9.400l5 4.800h-2.600v3.600h-4.800v-3.600h-2.600z" fill="#a0a0a0" stroke="#909090" stroke-width="0.500"/></g>
<g transform="translate(597.5,77)"><ellipse cx="4" cy="5.600" rx="6" ry="2" fill="#bbb" opacity="0.700"/><path d="M-9 0.600l6-2.800 10.600 1v6.400l-6 3.400-10.600-1.600z" fill="url(#ggray)" stroke="#b0b0b0" stroke-width="0.600"/><path d="M-9 0.600l6-2.800 10.600 1-6 3z" fill="#a8a8a8"/></g>
<path d="M617.7 73.5h4M617.7 76.5h4M617.7 79.5h4" stroke="#cfcdc8" stroke-width="1"/>
<g transform="translate(640,77)"><ellipse cx="2.5" cy="7" rx="6" ry="1.7" fill="#3a3a3a" opacity="0.85"/><ellipse cx="5.5" cy="2" rx="4" ry="1.5" fill="#3a3a3a" opacity="0.85"/><circle cx="3.700" cy="-3.700" r="6.200" fill="url(#glsph)" stroke="#7080d0" stroke-width="0.500"/><circle cx="-2.400" cy="2.100" r="6.900" fill="url(#gbsph)" stroke="#081c60" stroke-width="0.500"/></g>
<g transform="translate(671.7,77)"><ellipse cx="1.500" cy="7.600" rx="6.500" ry="1.500" fill="#9a9a9a" opacity="0.700"/><circle cx="-2.900" cy="2.100" r="6.800" fill="url(#ggsph)"/><circle cx="3" cy="-3.700" r="6" fill="#fff" stroke="#8a8a8a" stroke-width="0.900"/></g>
<g transform="translate(703,77)"><ellipse cx="2.500" cy="7.200" rx="7" ry="1.700" fill="#9a9a9a" opacity="0.700"/><path d="M-2.700 -3.900a6.700 6.700 0 1 0 5.700 12 6.700 6.700 0 0 0 1.800-5 6.500 6.500 0 1 0-7.500-7z" fill="url(#ggsph)"/><circle cx="3.700" cy="-3.700" r="6.500" fill="url(#ggsph)"/><circle cx="-2.700" cy="2.700" r="6.800" fill="url(#ggsph)" opacity="0.800"/></g>
<g transform="translate(735,77)"><path d="M-2 7.600h6.500" stroke="#909090" stroke-width="1.600"/><circle cx="-3.100" cy="3.300" r="6.800" fill="#fbfbfb" stroke="#8a8a8a" stroke-width="0.900"/><circle cx="2.800" cy="-3.700" r="6.500" fill="#f7f7f7" stroke="#8a8a8a" stroke-width="0.900"/><circle cx="-3.100" cy="3.300" r="6.800" fill="none" stroke="#8a8a8a" stroke-width="0.900"/><ellipse cx="0" cy="0" rx="2.300" ry="4.800" fill="#8c8c8c" transform="rotate(-40)"/></g>
<g transform="translate(766.5,77)"><ellipse cx="1.500" cy="6.200" rx="9" ry="2.600" fill="#8a8a8a"/><path d="M-2 -5l4.600 0 4.400 11.400h-15z" fill="url(#ggsph)"/><circle cx="-0.800" cy="-5.600" r="3.900" fill="#e8e8e8" stroke="#9a9a9a" stroke-width="1.100"/><path d="M2.400 -3l7.400 5.200" stroke="#8a8a8a" stroke-width="1.500"/></g>
<g transform="translate(798,77)"><path d="M-9.600 -9.400l2 0.600v16.600l-2-0.800z" fill="#c8c8c8"/><path d="M-7.600 -8l5.600-1.600 9 2v3.600h2.600v6h-2.600v4l-5.400 3-9.200-3.600z" fill="#9c9c9c" stroke="#8c8c8c" stroke-width="0.500"/><path d="M-6.200 -5.600l7.600 1.600v10l-7.600-2.600z" fill="#7c7c7c"/><path d="M-4.200 -3.400l4.600 1v6.200l-4.600-1.600z" fill="#a6a6a6"/><path d="M1.400 -4l5.600-2.600v11l-5.600 3.200z" fill="#b8b8b8"/></g>
<g transform="translate(829,77)"><path d="M-11 -3l8-3.600 13 1.600-8 4.200z" fill="#b4b4b4" opacity="0.800"/><path d="M-11 4l8-3.600 13 1.600-8 4.200z" fill="#b4b4b4" opacity="0.800"/><path d="M-4.400 -8l3.600-1.600 5.600 0.800v15.600l-4 2.400-5.200-1.400z" fill="#8a8a8a" stroke="#7c7c7c" stroke-width="0.500"/><path d="M-4.400 -8l5.200 1v16.200l-5.200-1.400z" fill="#9e9e9e"/><path d="M-4.400 -8l3.600-1.600 5.600 0.800-4 1.800z" fill="#6e6e6e"/><path d="M-10 -1l7 1.400 11-3M-10 6l7 1.400 11-3" stroke="#a0a0a0" stroke-width="0.800" fill="none"/></g>
<path d="M849.7 73.5h4M849.7 76.5h4M849.7 79.5h4" stroke="#cfcdc8" stroke-width="1"/>
<g transform="translate(872,77)"><path d="M2 -4.600l8.600 3-3 7.600-6 1z" fill="#9a9a9a" opacity="0.600"/><path d="M2 5.400l8.600 2.200-0.400 1.600-8.600-2.200z" fill="#f0e070" stroke="#b8a840" stroke-width="0.400"/><path d="M-9.400 -5.600q0-2.400 2.400-2.800l6.600-0.800q2.600-0.200 3.800 2l0.800 9.200q-0.200 3.200-3 4l-6.400 1q-3 0-3.600-2.600z" fill="#d9d9d9" stroke="#7a7a7a" stroke-width="0.800"/><circle cx="-3.600" cy="-0.400" r="4.600" fill="#0a0a0a"/><path d="M-8.200 -0.800a4.600 4.600 0 0 1 7.400-3.200z" fill="#f4ec14"/><path d="M2.200 -3.200l1.600-0.200 0.400 5.600-1.600 0.200z" fill="#f0e614"/></g>
<g transform="translate(903,77)"><path d="M2 -4.600l8.600 3-3 7.600-6 1z" fill="#9a9a9a" opacity="0.600"/><path d="M2 5.400l8.600 2.200-0.400 1.600-8.600-2.200z" fill="#f0e070" stroke="#b8a840" stroke-width="0.400"/><path d="M-9.400 -5.600q0-2.400 2.400-2.800l6.600-0.800q2.600-0.200 3.800 2l0.800 9.200q-0.200 3.200-3 4l-6.400 1q-3 0-3.600-2.600z" fill="#d9d9d9" stroke="#7a7a7a" stroke-width="0.800"/><circle cx="-3.600" cy="-0.400" r="4.600" fill="#0a0a0a"/><path d="M-8.200 -0.800a4.600 4.600 0 0 1 7.400-3.200z" fill="#f4ec14"/><path d="M2.200 -3.200l1.600-0.200 0.400 5.600-1.600 0.200z" fill="#f0e614"/><path d="M-0.600 -8.600c3-1.600 6.600-1.400 8.600 0.600l-1.400 1.800c-2-1.400-4.200-1.600-6.600-0.600z" fill="#1a4ab8"/><path d="M-8.600 -8.400l5.600 16.200 11.600-14.400" fill="none" stroke="#d42020" stroke-width="1.700" stroke-linejoin="miter"/><path d="M-9.600 -8.600l6.400 17.800 12.400-15.600" fill="none" stroke="#3a0a0a" stroke-width="0.500"/></g>
<path d="M923 66.5v21" stroke="#dbd9d5" stroke-width="1"/><path d="M924 66.5v21" stroke="#fbfbfa" stroke-width="1"/>
<g transform="translate(944,77)"><path d="M2 -4.600l8.600 3-3 7.600-6 1z" fill="#9a9a9a" opacity="0.600"/><path d="M2 5.400l8.600 2.200-0.400 1.600-8.600-2.200z" fill="#f0e070" stroke="#b8a840" stroke-width="0.400"/><path d="M-9.400 -5.600q0-2.400 2.400-2.800l6.600-0.800q2.600-0.200 3.800 2l0.800 9.200q-0.200 3.200-3 4l-6.400 1q-3 0-3.600-2.600z" fill="#d9d9d9" stroke="#7a7a7a" stroke-width="0.800"/><circle cx="-3.600" cy="-0.400" r="4.600" fill="#0a0a0a"/><path d="M-8.200 -0.800a4.600 4.600 0 0 1 7.400-3.200z" fill="#f4ec14"/><path d="M2.200 -3.200l1.600-0.200 0.400 5.600-1.600 0.200z" fill="#f0e614"/><path d="M-7.400 6.400l13-13.600 2.200 2.200-13 13.600z" fill="#ecdc7c" stroke="#8a7a3a" stroke-width="0.500"/><path d="M5.600 -7.200l3.600-3 -1.400 5.200z" fill="#e4c4a0"/><path d="M8 -9.200l1.200-1-0.400 1.800z" fill="#111"/><circle cx="-8" cy="7.600" r="2" fill="#d87070" stroke="#8a3a3a" stroke-width="0.500"/></g>
<g transform="translate(976,77)"><path d="M2 -4.600l8.600 3-3 7.600-6 1z" fill="#9a9a9a" opacity="0.600"/><path d="M2 5.400l8.600 2.200-0.400 1.600-8.600-2.200z" fill="#f0e070" stroke="#b8a840" stroke-width="0.400"/><path d="M-9.400 -5.600q0-2.400 2.400-2.800l6.600-0.800q2.600-0.200 3.800 2l0.800 9.200q-0.200 3.200-3 4l-6.400 1q-3 0-3.600-2.600z" fill="#d9d9d9" stroke="#7a7a7a" stroke-width="0.800"/><circle cx="-3.600" cy="-0.400" r="4.600" fill="#0a0a0a"/><path d="M-8.200 -0.800a4.600 4.600 0 0 1 7.400-3.200z" fill="#f4ec14"/><path d="M2.200 -3.200l1.600-0.200 0.400 5.600-1.600 0.200z" fill="#f0e614"/><path d="M-9 -8.200h18.400v14h-2v-12h-14.400v12h-2z" fill="#2a8a2a" stroke="#1a6a1a" stroke-width="0.400"/><path d="M-8.600 1.400l7.600-10.600 9.600 7.400-7.600 10.400" fill="none" stroke="#d02a2a" stroke-width="1.600"/></g>
<g transform="translate(1007,77)"><path d="M2 -4.600l8.600 3-3 7.600-6 1z" fill="#9a9a9a" opacity="0.600"/><path d="M2 5.400l8.600 2.200-0.400 1.600-8.600-2.200z" fill="#f0e070" stroke="#b8a840" stroke-width="0.400"/><path d="M-9.400 -5.600q0-2.400 2.400-2.800l6.600-0.800q2.600-0.200 3.800 2l0.800 9.200q-0.200 3.200-3 4l-6.400 1q-3 0-3.600-2.600z" fill="#d9d9d9" stroke="#7a7a7a" stroke-width="0.800"/><circle cx="-3.600" cy="-0.400" r="4.600" fill="#0a0a0a"/><path d="M-8.200 -0.800a4.600 4.600 0 0 1 7.400-3.200z" fill="#f4ec14"/><path d="M2.200 -3.200l1.600-0.200 0.400 5.600-1.600 0.200z" fill="#f0e614"/><path d="M-9 -0.600l7.200-10 10.400 7.600-7.600 10.400" fill="none" stroke="#d03a3a" stroke-width="1.700"/></g>
<g transform="translate(1039,77)"><path d="M2 -4.600l8.600 3-3 7.600-6 1z" fill="#9a9a9a" opacity="0.600"/><path d="M2 5.400l8.600 2.200-0.400 1.600-8.600-2.200z" fill="#f0e070" stroke="#b8a840" stroke-width="0.400"/><path d="M-9.400 -5.600q0-2.400 2.400-2.800l6.600-0.800q2.600-0.200 3.800 2l0.800 9.200q-0.200 3.200-3 4l-6.400 1q-3 0-3.600-2.600z" fill="#d9d9d9" stroke="#7a7a7a" stroke-width="0.800"/><circle cx="-3.600" cy="-0.400" r="4.600" fill="#0a0a0a"/><path d="M-8.200 -0.800a4.600 4.600 0 0 1 7.400-3.200z" fill="#f4ec14"/><path d="M2.200 -3.200l1.600-0.200 0.400 5.600-1.600 0.200z" fill="#f0e614"/><path d="M-9.400 -8h18.800v14.400h-2v-12.400h-14.800v12.400h-2z" fill="#2a8a2a" stroke="#1a6a1a" stroke-width="0.400"/></g>
<path d="M1060 73.5h4M1060 76.5h4M1060 79.5h4" stroke="#cfcdc8" stroke-width="1"/>
<g transform="translate(1082,77)"><ellipse cx="0" cy="9.400" rx="7.600" ry="1" fill="#4a4a4a" opacity="0.800" filter="url(#blur1)"/><path d="M-10 -1.400q0-2.400 2.600-2.400h4.600v-4.600q0-2.600 2.800-2.600t2.800 2.600v4.600h4.600q2.600 0 2.600 2.400t-2.600 2.600h-4.600v4.400q0 2.600-2.800 2.600t-2.800-2.600v-4.400h-4.600q-2.600 0-2.600-2.600z" fill="url(#ggrn)"/></g>
<path d="M1102.5 66.5v21" stroke="#dbd9d5" stroke-width="1"/><path d="M1103.5 66.5v21" stroke="#fbfbfa" stroke-width="1"/></svg><span class="t" style="left:477.55px;top:36.00px;font-size:13px;transform:scaleX(1.0139);">Part</span>
<span class="t" style="left:58.86px;top:99.00px;font-size:13px;transform:scaleX(0.9895);">Combo View</span>
<svg style="left:354px;top:100px" width="10" height="10" viewBox="0 0 10 10"><rect x="0.5" y="0.5" width="9" height="9" rx="1.6" fill="#f4f3f2" stroke="#7d7b76"/><rect x="4" y="2.5" width="3.5" height="3.5" fill="none" stroke="#6a6864" stroke-width="0.9"/><rect x="2.5" y="4" width="3.5" height="3.5" fill="#f4f3f2" stroke="#6a6864" stroke-width="0.9"/></svg>
<svg style="left:369px;top:100px" width="10" height="10" viewBox="0 0 10 10"><rect x="0.5" y="0.5" width="9" height="9" rx="1.6" fill="#f4f3f2" stroke="#7d7b76"/><path d="M2.6 2.6L7.4 7.4M7.4 2.6L2.6 7.4" stroke="#4a4946" stroke-width="1.5"/></svg>
<div class="a" style="left:108px;top:119px;width:45px;height:23px;background:linear-gradient(#f0efee,#e4e3e1);border:1px solid #c4c2bd;border-bottom:none;border-radius:4px 4px 0 0"></div>
<div class="a" style="left:58px;top:116px;width:51px;height:27px;background:#f7f6f5;border:1px solid #c4c2bd;border-bottom:none;border-radius:4px 4px 0 0"></div>
<span class="t" style="left:64.01px;top:123.00px;font-size:13px;transform:scaleX(1.0515);">Model</span>
<span class="t" style="left:114.85px;top:124.00px;font-size:13px;transform:scaleX(0.9569);">Tasks</span>
<div class="a" style="left:59px;top:143px;width:321px;height:229.4px;background:#fff;border:1px solid #d0cec9;border-top:1px solid #c9c7c2;border-radius:2px"></div>
<div class="a" style="left:60px;top:144px;width:317px;height:22px;background:linear-gradient(#fdfdfd,#f3f2f1 60%,#efeeed);border-bottom:1px solid #c3c1bc;border-right:1px solid #dddbd7"></div>
<span class="t" style="left:62.32px;top:149.00px;font-size:13px;transform:scaleX(1.0362);">Labels &amp; Attributes</span>
<span class="t" style="left:62.00px;top:168.00px;font-size:13px;transform:scaleX(1.0511);">Application</span>
<span class="t" style="left:99.37px;top:185.00px;font-size:13px;font-weight:700;color:#3c3c3c;transform:scaleX(0.9826);">Renacuajo-wheel-pentacle-assembly</span>
<span class="t" style="left:116.66px;top:201.00px;font-size:13px;font-weight:700;color:#3c3c3c;transform:scaleX(0.9908);">Renacuajo-wheel-pentacle-assembly-final</span>
<svg style="left:66px;top:186px" width="10" height="10" viewBox="0 0 10 10"><path d="M1.4 2.6h7L4.9 7.8z" fill="#8a8a8a" stroke="#555" stroke-width="0.8"/></svg>
<svg style="left:83px;top:202.6px" width="10" height="10" viewBox="0 0 10 10"><path d="M2.6 1.8l4.4 3.2L2.600 8.200z" fill="#9a9a9a" stroke="#444" stroke-width="0.8"/></svg>
<svg style="left:80px;top:183px" width="13" height="15" viewBox="0 0 13 15"><path d="M1.5 1h7l3 3v10h-10z" fill="#fdfdfd" stroke="#6b6b6b"/><path d="M8.5 1v3h3" fill="#e8e8e8" stroke="#6b6b6b" stroke-width="0.8"/><path d="M3.5 4.5h4M3.5 6.5h6" stroke="#9a9a9a" stroke-width="0.9"/><path d="M6 9h5v3H6z" fill="#c81fd0"/><path d="M2.2 10.5L5.6 8v5z" fill="#14b8c0"/></svg>
<svg style="left:98.2px;top:201.4px" width="11" height="11.8" viewBox="0 0 13 14"><path d="M1 3.6L4 1.4h8.2v8.4L9.3 12.6H1z" fill="#00009c" stroke="#000030" stroke-width="1" stroke-linejoin="round"/><path d="M1.2 3.8h8v8.6h-8z" fill="#0a1ff0"/><path d="M1.4 3.6l2.8-2h7.6L9.2 3.6z" fill="#0010b8"/><path d="M9.3 3.7v8.8M1 3.6h8.3l2.9-2.2" fill="none" stroke="#00003a" stroke-width="0.8"/></svg>
<svg style="left:214px;top:374px" width="8" height="4" viewBox="0 0 8 4"><path d="M2.5 0v4M5.5 0v4" stroke="#c9c7c2" stroke-width="0.8"/></svg>
<div class="a" style="left:60px;top:378px;width:319px;height:242px;background:#fff;border:1px solid #d0cec9;border-top:1px solid #c9c7c2;border-radius:2px"></div>
<div class="a" style="left:61px;top:379px;width:316px;height:23px;background:linear-gradient(#fdfdfd,#f3f2f1 60%,#efeeed);border-bottom:1px solid #c3c1bc;"></div>
<div class="a" style="left:148px;top:380px;width:1px;height:21px;background:#d8d6d2;"></div>
<span class="t" style="left:63.90px;top:385.00px;font-size:13px;transform:scaleX(1.0603);">Property</span>
<span class="t" style="left:151.93px;top:385.00px;font-size:13px;transform:scaleX(1.0425);">Value</span>
<svg style="left:57px;top:619px" width="100" height="28" viewBox="0 0 100 28"><path d="M1.5 1.5L8.5 24.5q0.6 1.5 2.4 1.5h27.5q1.6 0 2.2-1.5L47 1.5" fill="#f2f1f0" stroke="#8d8b86" stroke-width="0.9"/><path d="M44.5 0.5L51.5 25.2q0.6 1.5 2.4 1.5h22q1.6 0 2.2-1.5L85 1" fill="#fff" stroke="#77756f" stroke-width="0.9"/></svg>
<span class="t" style="left:65.93px;top:627.00px;font-size:13px;transform:scaleX(1.0041);">View</span>
<span class="t" style="left:107.94px;top:628.00px;font-size:13px;transform:scaleX(1.0231);">Data</span>
<div class="a" style="left:380px;top:94px;width:6px;height:555px;background:linear-gradient(90deg,#e2e0dc,#f2f1f0 50%,#ecebe9);"></div>
<div class="a" style="left:386px;top:94px;width:1px;height:526px;background:#aaa8a4;"></div>
<svg style="left:0;top:0" width="1199" height="675" viewBox="0 0 1199 675">
<defs>
<linearGradient id="bg1" gradientUnits="userSpaceOnUse" x1="0" y1="68" x2="0" y2="330"><stop offset="0" stop-color="#333365"/><stop offset="1" stop-color="#9797aa"/></linearGradient>
<clipPath id="cp1"><rect x="390" y="94" width="392" height="236"/></clipPath>
<linearGradient id="bg2" gradientUnits="userSpaceOnUse" x1="0" y1="68" x2="0" y2="330"><stop offset="0" stop-color="#333365"/><stop offset="1" stop-color="#9797aa"/></linearGradient>
<clipPath id="cp2"><rect x="789" y="94" width="391" height="236"/></clipPath>
<linearGradient id="bg3" gradientUnits="userSpaceOnUse" x1="0" y1="355" x2="0" y2="617"><stop offset="0" stop-color="#333365"/><stop offset="1" stop-color="#9797aa"/></linearGradient>
<clipPath id="cp3"><rect x="390" y="355" width="392" height="262"/></clipPath>
<linearGradient id="bg4" gradientUnits="userSpaceOnUse" x1="0" y1="355" x2="0" y2="617"><stop offset="0" stop-color="#333365"/><stop offset="1" stop-color="#9797aa"/></linearGradient>
<clipPath id="cp4"><rect x="789" y="355" width="391" height="262"/></clipPath>
<linearGradient id="sideg" x1="0" y1="0" x2="1" y2="0"><stop offset="0" stop-color="#0a4a0a"/><stop offset="0.07" stop-color="#06a006"/><stop offset="0.3" stop-color="#02f002"/><stop offset="0.5" stop-color="#00ff00"/><stop offset="0.7" stop-color="#02f002"/><stop offset="0.93" stop-color="#06a006"/><stop offset="1" stop-color="#0a4a0a"/></linearGradient>
</defs>
<rect x="387" y="94" width="797" height="527" fill="#f5f4f3"/>
<rect x="390" y="94" width="392" height="236" fill="url(#bg1)"/>
<rect x="789" y="94" width="391" height="236" fill="url(#bg2)"/>
<rect x="390" y="355" width="392" height="262" fill="url(#bg3)"/>
<rect x="789" y="355" width="391" height="262" fill="url(#bg4)"/>
<g clip-path="url(#cp1)">
<rect x="568" y="210" width="36" height="6" fill="#2b2b2b" stroke="#111" stroke-width="0.8"/>
<rect x="576" y="212.2" width="20" height="1.6" fill="#4a4a4a"/>
<rect x="476.6" y="182" width="219.4" height="29.6" fill="url(#sideg)" stroke="#0a1a0a" stroke-width="0.9"/>
<rect x="477" y="182.5" width="218.6" height="2" fill="#063006" opacity="0.55"/>
<rect x="477" y="209" width="218.6" height="2.2" fill="#063006" opacity="0.55"/>
<rect x="473" y="190" width="226.4" height="13.4" rx="6.7" fill="#0c0c0c"/>
<rect x="478" y="195.6" width="216" height="1.2" fill="#1d1d1d"/>
</g>
<g clip-path="url(#cp2)">
<path d="M982.4,134.5 973.0,134.7 968.3,135.1 959.2,136.4 950.3,138.3 941.7,141.0 933.7,144.4 926.2,148.3 919.3,152.8 913.1,157.9 907.6,163.4 903.1,169.3 899.3,175.6 896.6,182.2 894.7,188.9 894.2,192.3 893.6,200.6 893.7,207.5 894.8,214.5 896.9,221.3 899.9,227.9 903.8,234.4 908.6,240.4 914.3,246.2 920.6,251.4 927.7,256.2 935.4,260.4 943.6,264.0 952.2,267.0 961.2,269.3 965.8,270.2 975.0,271.4 984.4,271.9 993.8,271.7 1003.1,270.8 1012.1,269.2 1016.5,268.1 1025.0,265.4 1033.1,262.1 1040.6,258.1 1047.5,253.6 1053.7,248.6 1056.5,245.8 1061.5,240.1 1065.7,234.0 1069.0,227.6 1071.3,220.9 1072.1,217.5 1072.9,210.6 1073.3,202.4 1073.1,198.9 1072.0,192.0 1071.1,188.5 1068.5,181.8 1066.9,178.5 1062.9,172.1 1058.1,166.0 1055.4,163.1 1049.4,157.6 1042.7,152.6 1035.3,148.1 1031.4,146.0 1023.2,142.4 1014.6,139.5 1005.6,137.2 996.4,135.6 991.7,135.0Z" fill="#0aa00a" stroke="#031503" stroke-width="1.2"/>
<path d="M982.7,127.8 973.1,128.0 963.7,129.0 954.5,130.7 945.6,133.0 941.3,134.5 933.1,137.9 925.4,141.9 918.4,146.5 912.1,151.6 906.6,157.3 901.9,163.3 898.1,169.7 895.3,176.4 893.4,183.3 892.9,186.7 892.4,193.1 892.5,200.2 893.6,207.3 895.7,214.2 898.8,221.0 902.8,227.5 905.2,230.7 910.5,236.7 916.6,242.3 923.4,247.4 931.0,252.0 939.0,255.9 947.6,259.3 956.6,262.0 965.9,264.0 975.3,265.2 984.9,265.8 994.4,265.6 1003.9,264.6 1013.1,263.0 1021.9,260.6 1030.4,257.5 1038.4,253.8 1042.1,251.7 1049.1,247.1 1052.4,244.6 1058.3,239.2 1063.4,233.4 1067.6,227.2 1069.4,223.9 1072.3,217.2 1074.1,210.4 1075.0,203.4 1075.2,196.9 1075.0,193.4 1073.9,186.4 1071.8,179.4 1068.7,172.6 1066.8,169.3 1062.4,163.0 1057.1,156.9 1054.1,154.1 1047.6,148.7 1044.1,146.2 1036.6,141.7 1032.6,139.6 1024.3,135.9 1015.5,132.9 1006.3,130.5 997.0,128.9 987.4,128.0Z" fill="#0b0b0b" stroke="#000" stroke-width="0.8"/>
<path d="M983.0,123.3 973.6,123.5 969.0,123.9 959.8,125.1 950.9,127.1 942.4,129.8 934.3,133.1 926.8,137.1 919.9,141.6 913.7,146.7 908.3,152.2 903.7,158.1 900.0,164.4 897.2,170.9 895.4,177.7 894.8,181.1 894.3,188.4 894.4,195.4 895.5,202.3 897.6,209.1 900.6,215.8 904.6,222.2 909.4,228.3 915.0,234.0 921.4,239.2 928.4,244.0 936.1,248.2 944.3,251.8 952.9,254.8 961.9,257.1 971.1,258.7 975.8,259.2 985.2,259.8 994.5,259.6 1003.8,258.6 1012.8,257.0 1021.5,254.7 1029.9,251.6 1037.7,248.0 1041.4,246.0 1048.3,241.4 1054.4,236.4 1057.3,233.7 1062.3,227.9 1066.4,221.8 1068.2,218.7 1070.9,212.1 1072.8,205.3 1073.6,198.5 1073.9,191.1 1073.7,187.7 1072.6,180.8 1071.7,177.3 1069.2,170.6 1067.5,167.3 1063.6,160.9 1058.8,154.8 1056.1,151.9 1050.1,146.4 1043.4,141.3 1036.0,136.9 1032.1,134.8 1023.9,131.2 1015.3,128.2 1006.3,125.9 997.1,124.3 987.7,123.5Z" fill="#0aa40a" stroke="#031503" stroke-width="1.2"/>
<path d="M983.0,123.3 973.6,123.5 969.0,123.9 959.8,125.1 950.9,127.1 942.4,129.8 934.3,133.1 926.8,137.1 919.9,141.6 913.7,146.7 908.3,152.2 903.7,158.1 900.0,164.4 897.2,170.9 895.4,177.7 894.8,181.1 894.4,186.3 894.6,193.3 895.7,200.2 897.7,207.0 900.8,213.7 904.7,220.1 909.5,226.2 915.1,231.9 921.5,237.2 928.5,241.9 936.2,246.1 944.4,249.8 948.7,251.3 957.5,254.0 966.6,255.9 975.9,257.2 985.3,257.7 994.6,257.5 1003.9,256.6 1012.9,254.9 1017.4,253.8 1025.9,251.2 1034.0,247.8 1041.5,243.9 1048.4,239.3 1054.6,234.3 1057.4,231.6 1062.4,225.9 1066.5,219.7 1069.8,213.3 1072.1,206.7 1072.9,203.3 1073.8,196.4 1073.9,191.1 1073.7,187.7 1072.6,180.8 1071.7,177.3 1069.2,170.6 1067.5,167.3 1063.6,160.9 1058.8,154.8 1056.1,151.9 1050.1,146.4 1043.4,141.3 1036.0,136.9 1032.1,134.8 1023.9,131.2 1015.3,128.2 1006.3,125.9 997.1,124.3 987.7,123.5Z" fill="#0a9c0a" stroke="#031503" stroke-width="1.0"/>
<path d="M1073.7,187.7 1073.8,195.5 1073.2,200.6 1072.0,205.7 1069.2,213.2 1065.2,220.3 1060.1,227.0 1056.1,231.2 1049.3,237.0 1041.6,242.1 1036.0,245.1 1027.0,249.0 1020.7,251.1 1014.2,252.9 1004.0,254.8 997.1,255.6 986.6,255.9 979.5,255.7 969.0,254.5 958.7,252.5 948.8,249.6 939.3,245.8 933.4,242.9 927.7,239.6 919.9,234.1 915.2,230.1 908.9,223.7 903.7,216.8 900.9,211.9 898.5,207.0 896.0,199.3 895.0,194.1 894.5,186.3 895.2,178.6 896.4,173.5 899.2,166.0 901.7,161.2 904.8,156.6 910.2,150.1 914.5,146.0 921.6,140.4 926.8,137.1 935.3,132.7 941.4,130.2 947.7,128.1 954.2,126.3 964.4,124.4 971.3,123.6 981.8,123.3 992.4,123.8 999.4,124.7 1009.7,126.7 1016.4,128.6 1022.8,130.8 1029.1,133.4 1035.0,136.3 1043.4,141.3 1050.9,147.0 1055.4,151.2 1059.5,155.5 1064.7,162.4 1068.8,169.7 1070.9,174.8 1073.0,182.5Z" fill="#0cd00c" stroke="#031503" stroke-width="1.4"/>
<path d="M1048.3,226.0 1051.4,222.7 1055.4,217.5 1058.7,211.9 1061.2,206.1 1062.8,200.1 1063.6,194.0 1063.4,187.9 1062.9,183.7 1034.5,200.4Z" fill="#0a8a0a" stroke="#021002" stroke-width="0.9"/>
<path d="M1063.6,187.9 1063.4,187.7 1063.3,187.9 1062.5,200.6 1062.7,200.7 1062.9,200.2 1063.5,196.5 1063.8,192.0Z" fill="#0c300c"/>
<path d="M1063.4,185.8 1063.2,185.7 1063.1,185.8 1062.1,201.9 1062.3,202.4 1062.5,202.3 1062.8,200.6 1063.6,187.9Z" fill="#0c300c"/>
<path d="M1063.0,183.7 1062.9,183.6 1062.7,183.7 1061.8,199.7 1062.1,201.9 1062.3,202.0 1062.4,201.9 1063.4,185.9Z" fill="#0c300c"/>
<path d="M1034.4,200.3 1034.4,200.5 1040.7,212.2 1040.9,212.3 1062.1,199.8 1063.0,183.7 1062.8,183.6Z" fill="#0c6c0c"/>
<path d="M1048.2,226.1 1052.8,221.0 1055.4,217.5 1058.7,211.9 1060.4,208.1 1062.3,202.3 1061.9,199.7 1040.8,212.2Z" fill="url(#bg2)" stroke="#021002" stroke-width="1.1" stroke-linejoin="round"/>
<path d="M1048.3,226.0 1051.4,222.7 1055.4,217.5 1058.7,211.9 1061.2,206.1 1062.8,200.1 1063.6,194.0 1063.4,187.9 1062.9,183.7 1034.5,200.4Z" fill="none" stroke="#021002" stroke-width="1.3" stroke-linejoin="round"/>
<path d="M1033.3,237.0 1036.6,235.1 1022.1,207.7 1000.0,220.7Z" fill="#0a8a0a" stroke="#021002" stroke-width="0.9"/>
<path d="M1022.2,207.6 1022.0,207.6 1021.9,207.7 1021.0,223.8 1026.3,233.8 1033.3,237.2 1036.7,235.2 1036.8,235.0Z" fill="#0c3c0c"/>
<path d="M1000.0,220.5 1000.0,220.8 1014.4,227.8 1021.3,223.8 1022.2,207.6 1022.0,207.6Z" fill="#0c6c0c"/>
<path d="M1026.4,233.7 1021.1,223.7 1014.4,227.7Z" fill="url(#bg2)" stroke="#021002" stroke-width="1.1" stroke-linejoin="round"/>
<path d="M1033.3,237.0 1036.6,235.1 1022.1,207.7 1000.0,220.7Z" fill="none" stroke="#021002" stroke-width="1.3" stroke-linejoin="round"/>
<path d="M959.3,244.7 967.4,246.5 972.8,247.4 981.1,248.1 989.4,248.3 997.7,247.8 1005.8,246.6 1013.6,244.9 1018.8,243.3 987.6,228.0Z" fill="#0a8a0a" stroke="#021002" stroke-width="0.9"/>
<path d="M959.2,244.5 959.1,244.7 959.3,244.8 967.3,246.6 972.8,247.5 979.8,248.2 986.8,244.0 987.7,227.9 987.5,227.8Z" fill="#0c6c0c"/>
<path d="M987.7,227.8 987.4,228.0 986.6,244.1 994.9,248.2 1000.4,247.6 1008.4,246.3 1013.7,245.0 1018.9,243.4 1018.9,243.2Z" fill="#0c7f0c"/>
<path d="M979.7,248.0 986.6,248.3 994.9,248.0 986.7,244.0Z" fill="url(#bg2)" stroke="#021002" stroke-width="1.1" stroke-linejoin="round"/>
<path d="M959.3,244.7 967.4,246.5 972.8,247.4 981.1,248.1 989.4,248.3 997.7,247.8 1005.8,246.6 1013.6,244.9 1018.8,243.3 987.6,228.0Z" fill="none" stroke="#021002" stroke-width="1.3" stroke-linejoin="round"/>
<path d="M940.0,237.1 943.7,239.0 973.9,221.2 949.7,209.3Z" fill="#0a8a0a" stroke="#021002" stroke-width="0.9"/>
<path d="M939.9,237.1 939.9,237.3 943.6,239.1 944.2,238.8 948.9,225.3 949.8,209.3 949.7,209.1 949.5,209.2Z" fill="#0c300c"/>
<path d="M949.7,209.1 949.5,209.3 948.7,225.4 958.7,230.3 974.0,221.3 974.0,221.1Z" fill="#0c7f0c"/>
<path d="M958.7,230.2 948.7,225.3 944.0,238.8Z" fill="url(#bg2)" stroke="#021002" stroke-width="1.1" stroke-linejoin="round"/>
<path d="M940.0,237.1 943.7,239.0 973.9,221.2 949.7,209.3Z" fill="none" stroke="#021002" stroke-width="1.3" stroke-linejoin="round"/>
<path d="M904.8,187.2 905.2,193.4 906.4,199.5 908.6,205.5 910.4,209.4 913.9,215.0 918.2,220.4 923.1,225.5 926.9,228.7 936.0,202.5Z" fill="#0a8a0a" stroke="#021002" stroke-width="0.9"/>
<path d="M904.8,187.0 904.6,187.1 904.7,189.3 905.4,195.4 906.9,201.5 908.5,205.6 931.2,216.7 936.1,202.4Z" fill="#0c7f0c"/>
<path d="M908.6,205.5 912.7,213.2 916.7,218.7 921.4,223.8 926.9,228.7 931.1,216.6Z" fill="url(#bg2)" stroke="#021002" stroke-width="1.1" stroke-linejoin="round"/>
<path d="M904.8,187.2 905.2,193.4 906.4,199.5 908.6,205.5 910.4,209.4 913.9,215.0 918.2,220.4 923.1,225.5 926.9,228.7 936.0,202.5Z" fill="none" stroke="#021002" stroke-width="1.3" stroke-linejoin="round"/>
<path d="M907.8,171.5 906.7,174.6 940.0,191.0 947.0,170.7Z" fill="#0a8a0a" stroke="#021002" stroke-width="0.9"/>
<path d="M906.6,174.6 907.1,175.0 907.3,174.9 907.3,173.0 907.1,173.0Z" fill="#0c300c"/>
<path d="M907.1,173.0 907.0,174.9 907.6,175.2 907.7,175.1 907.9,171.4 907.7,171.5Z" fill="#0c300c"/>
<path d="M907.8,171.4 907.6,171.5 907.5,175.2 931.8,187.2 941.5,186.9 947.2,170.7 947.0,170.6Z" fill="#0c930c"/>
<path d="M940.0,191.0 941.4,186.8 931.8,187.0Z" fill="url(#bg2)" stroke="#021002" stroke-width="1.1" stroke-linejoin="round"/>
<path d="M907.8,171.5 906.7,174.6 940.0,191.0 947.0,170.7Z" fill="none" stroke="#021002" stroke-width="1.3" stroke-linejoin="round"/>
<path d="M960.0,133.1 952.2,135.0 944.8,137.6 940.1,139.6 933.4,143.1 927.3,147.1 921.8,151.6 917.0,156.5 914.2,160.0 951.0,159.2Z" fill="#0a8a0a" stroke="#021002" stroke-width="0.9"/>
<path d="M915.5,158.1 914.0,160.0 914.2,160.2 915.6,160.1 915.7,158.1Z" fill="#0c3c0c"/>
<path d="M918.4,154.7 915.5,158.2 915.4,160.1 918.4,160.0 918.7,154.7Z" fill="#0c450c"/>
<path d="M921.7,151.5 918.4,154.8 918.1,159.9 918.2,160.1 921.3,160.0 921.5,159.9 921.9,151.5Z" fill="#0c4f0c"/>
<path d="M925.3,148.4 921.7,151.6 921.2,159.8 921.3,160.0 924.7,159.9 924.9,159.8 925.5,148.5Z" fill="#0c590c"/>
<path d="M931.2,144.3 925.3,148.5 924.6,159.8 924.7,159.9 930.4,159.8 930.6,159.7 931.4,144.3Z" fill="#0c620c"/>
<path d="M935.5,141.8 931.2,144.4 930.3,159.7 930.4,159.8 931.7,159.8 934.8,157.9 935.7,141.8Z" fill="#0c6c0c"/>
<path d="M942.4,138.4 935.4,141.9 934.5,157.9 934.6,158.1 941.6,154.6 942.5,138.5Z" fill="#0c760c"/>
<path d="M952.2,134.9 944.7,137.5 942.3,138.5 941.3,154.6 941.4,154.7 946.3,152.8 951.4,151.1 952.4,135.0Z" fill="#0c7f0c"/>
<path d="M960.2,132.9 954.7,134.2 952.1,135.0 951.2,151.2 954.2,150.3 960.2,133.1Z" fill="#0c890c"/>
<path d="M951.0,159.2 954.1,150.3 948.7,151.8 941.5,154.6 936.8,156.8 931.7,159.6Z" fill="url(#bg2)" stroke="#021002" stroke-width="1.1" stroke-linejoin="round"/>
<path d="M960.0,133.1 952.2,135.0 944.8,137.6 940.1,139.6 933.4,143.1 927.3,147.1 921.8,151.6 917.0,156.5 914.2,160.0 951.0,159.2Z" fill="none" stroke="#021002" stroke-width="1.3" stroke-linejoin="round"/>
<path d="M981.2,130.9 976.8,131.0 967.1,158.9 995.8,158.3Z" fill="#0a8a0a" stroke="#021002" stroke-width="0.9"/>
<path d="M967.0,158.8 967.2,159.0 971.9,158.8 976.0,147.0 977.0,131.0 976.9,130.8 976.7,130.9Z" fill="#0c300c"/>
<path d="M981.3,130.8 981.2,130.7 981.0,130.9 980.1,147.0 986.3,158.6 995.8,158.4 995.9,158.2Z" fill="#0c3c0c"/>
<path d="M981.2,130.7 976.8,130.8 976.7,131.0 975.7,147.0 975.8,147.2 980.2,147.1 980.4,146.9 981.3,130.9Z" fill="#0c930c"/>
<path d="M986.4,158.5 980.2,146.9 975.9,147.0 971.8,158.8Z" fill="url(#bg2)" stroke="#021002" stroke-width="1.1" stroke-linejoin="round"/>
<path d="M981.2,130.9 976.8,131.0 967.1,158.9 995.8,158.3Z" fill="none" stroke="#021002" stroke-width="1.3" stroke-linejoin="round"/>
<path d="M1048.7,157.1 1043.4,152.1 1037.6,147.6 1033.4,144.8 1026.6,141.1 1019.3,137.9 1011.7,135.3 1003.7,133.3 998.2,132.2 1011.9,157.9Z" fill="#0a8a0a" stroke="#021002" stroke-width="0.9"/>
<path d="M1047.1,155.3 1046.8,155.3 1046.8,157.3 1048.8,157.2 1048.8,157.0Z" fill="#0c590c"/>
<path d="M1043.5,152.0 1043.3,152.1 1043.0,157.3 1047.0,157.3 1047.1,155.3Z" fill="#0c620c"/>
<path d="M1037.7,147.5 1037.4,147.6 1036.9,157.4 1043.2,157.4 1043.6,152.1Z" fill="#0c6c0c"/>
<path d="M1031.2,143.4 1031.0,143.5 1030.2,157.6 1037.1,157.5 1037.7,147.5Z" fill="#0c760c"/>
<path d="M1021.8,138.8 1021.6,138.9 1020.7,155.0 1026.5,157.7 1030.4,157.6 1031.3,143.5 1026.6,141.0Z" fill="#0c7f0c"/>
<path d="M1011.7,135.1 1011.5,135.3 1010.6,151.4 1015.8,153.1 1020.9,155.1 1021.9,138.9 1016.9,136.8Z" fill="#0c890c"/>
<path d="M998.2,132.1 998.1,132.3 1007.8,150.6 1010.8,151.4 1011.8,135.2 1006.5,133.7Z" fill="#0c930c"/>
<path d="M1011.9,157.9 1026.5,157.6 1018.4,153.9 1013.3,152.1 1008.0,150.5Z" fill="url(#bg2)" stroke="#021002" stroke-width="1.1" stroke-linejoin="round"/>
<path d="M1048.7,157.1 1043.4,152.1 1037.6,147.6 1033.4,144.8 1026.6,141.1 1019.3,137.9 1011.7,135.3 1003.7,133.3 998.2,132.2 1011.9,157.9Z" fill="none" stroke="#021002" stroke-width="1.3" stroke-linejoin="round"/>
<path d="M1058.7,171.4 1057.1,168.3 1017.9,169.2 1028.5,189.1Z" fill="#0a8a0a" stroke="#021002" stroke-width="0.9"/>
<path d="M1058.9,171.4 1057.9,169.7 1057.8,169.8 1057.7,171.9 1057.8,172.0Z" fill="#0c320c"/>
<path d="M1057.2,168.3 1057.1,168.2 1057.0,168.3 1056.7,172.5 1056.9,172.6 1058.0,171.9 1058.1,169.8Z" fill="#0c3c0c"/>
<path d="M1017.9,169.0 1017.8,169.2 1026.3,185.1 1036.0,184.9 1057.0,172.6 1057.3,168.3 1057.1,168.2Z" fill="#0c930c"/>
<path d="M1028.5,189.1 1035.9,184.8 1026.3,185.0Z" fill="url(#bg2)" stroke="#021002" stroke-width="1.1" stroke-linejoin="round"/>
<path d="M1058.7,171.4 1057.1,168.3 1017.9,169.2 1028.5,189.1Z" fill="none" stroke="#021002" stroke-width="1.3" stroke-linejoin="round"/>
<path d="M1019.09,188.85 1019.14,191.38 1018.86,193.90 1018.25,196.38 1017.31,198.79 1016.05,201.12 1014.48,203.33 1012.62,205.41 1010.49,207.34 1008.10,209.09 1005.48,210.66 1002.66,212.03 999.66,213.18 996.52,214.10 993.25,214.79 989.90,215.24 986.49,215.43 983.06,215.38 979.64,215.08 976.26,214.54 972.96,213.75 969.77,212.74 966.72,211.50 963.84,210.05 961.15,208.40 958.68,206.57 956.46,204.58 954.51,202.44 952.85,200.18 951.48,197.82 950.43,195.38 949.71,192.88 949.31,190.35 949.26,187.82 949.54,185.30 950.15,182.82 951.09,180.41 952.35,178.08 953.92,175.87 955.78,173.79 957.91,171.86 960.30,170.11 962.92,168.54 965.74,167.17 968.74,166.02 971.88,165.10 975.15,164.41 978.50,163.96 981.91,163.77 985.34,163.82 988.76,164.12 992.14,164.66 995.44,165.45 998.63,166.46 1001.68,167.70 1004.56,169.15 1007.25,170.80 1009.72,172.63 1011.94,174.62 1013.89,176.76 1015.55,179.02 1016.92,181.38 1017.97,183.82 1018.69,186.32Z" fill="#089008" stroke="#021002" stroke-width="1"/>
<path d="M1018.39,193.66 1018.01,191.16 1017.29,188.70 1016.25,186.28 1014.90,183.95 1013.26,181.72 1011.33,179.60 1009.13,177.63 1006.70,175.83 1004.04,174.20 1001.19,172.76 998.17,171.54 995.02,170.53 991.76,169.76 988.42,169.22 985.04,168.92 981.65,168.87 978.29,169.07 974.97,169.51 971.74,170.19 968.63,171.10 965.67,172.24 962.88,173.59 960.29,175.14 957.94,176.88 955.83,178.78 953.99,180.84 952.44,183.03 951.20,185.32 950.27,187.70 949.66,190.15 949.50,191.57 949.71,192.88 950.43,195.38 951.48,197.82 952.85,200.18 954.51,202.44 956.46,204.58 958.68,206.57 961.15,208.40 963.84,210.05 966.72,211.50 969.77,212.74 972.96,213.75 976.26,214.54 979.64,215.08 983.06,215.38 986.49,215.43 989.90,215.24 993.25,214.79 996.52,214.10 999.66,213.18 1002.66,212.03 1005.48,210.66 1008.10,209.09 1010.49,207.34 1012.62,205.41 1014.48,203.33 1016.05,201.12 1017.31,198.79 1018.25,196.38 1018.44,195.62Z" fill="#3a3a3a" stroke="#0a0a0a" stroke-width="0.9"/>
<path d="M961.11,186.41 960.98,187.11 960.50,187.71 959.74,188.12 958.82,188.28 957.87,188.16 956.86,187.66 956.36,187.04 956.20,186.34 956.42,185.65 956.98,185.09 957.57,184.81 958.49,184.65 959.44,184.77 960.27,185.14 960.86,185.72Z" fill="#343434" stroke="#1a1a1a" stroke-width="0.9"/>
<path d="M961.86,194.88 961.73,195.58 961.25,196.18 960.49,196.59 959.57,196.75 958.62,196.63 957.79,196.25 957.20,195.68 956.95,194.81 957.17,194.12 957.73,193.56 958.54,193.21 959.24,193.12 960.20,193.24 961.03,193.61 961.61,194.19Z" fill="#343434" stroke="#1a1a1a" stroke-width="0.9"/>
<path d="M962.61,203.35 962.48,204.05 962.00,204.65 961.24,205.06 960.08,205.21 959.14,205.03 958.36,204.60 957.86,203.98 957.70,203.28 957.92,202.59 958.48,202.03 959.29,201.68 960.00,201.59 960.95,201.71 961.78,202.08 962.36,202.66Z" fill="#343434" stroke="#1a1a1a" stroke-width="0.9"/>
<path d="M1010.13,185.35 1010.00,186.05 1009.52,186.65 1008.76,187.06 1007.84,187.22 1006.89,187.10 1006.06,186.73 1005.38,185.98 1005.22,185.28 1005.44,184.60 1006.00,184.04 1006.81,183.69 1007.76,183.60 1008.69,183.78 1009.29,184.09 1009.88,184.66Z" fill="#343434" stroke="#1a1a1a" stroke-width="0.9"/>
<path d="M1010.88,193.82 1010.75,194.52 1010.27,195.12 1009.51,195.53 1008.59,195.69 1007.64,195.57 1006.63,195.07 1006.13,194.45 1005.97,193.75 1006.10,193.23 1006.58,192.63 1007.34,192.22 1008.26,192.06 1009.22,192.18 1010.05,192.56 1010.63,193.13Z" fill="#343434" stroke="#1a1a1a" stroke-width="0.9"/>
<path d="M1011.63,202.29 1011.50,202.99 1011.02,203.59 1010.26,204.00 1009.34,204.16 1008.39,204.04 1007.56,203.67 1006.97,203.09 1006.72,202.22 1006.85,201.70 1007.33,201.10 1008.09,200.69 1009.02,200.53 1009.97,200.65 1010.80,201.03 1011.38,201.60Z" fill="#343434" stroke="#1a1a1a" stroke-width="0.9"/>
<path d="M998.21,194.10 998.12,196.17 997.48,198.17 996.32,200.03 994.69,201.67 992.64,203.04 990.25,204.07 987.62,204.73 984.85,204.99 982.05,204.85 979.31,204.30 976.75,203.38 974.47,202.11 972.55,200.54 971.07,198.74 970.08,196.77 969.78,195.75 969.60,193.67 969.71,192.64 970.35,190.64 971.51,188.78 973.14,187.14 975.19,185.77 977.58,184.74 980.21,184.08 982.98,183.82 985.79,183.96 988.52,184.51 991.08,185.43 993.36,186.70 995.28,188.27 996.77,190.07 997.76,192.04Z" fill="#2a2a2a" stroke="#0d0d0d" stroke-width="1"/>
<path d="M996.28,192.22 996.21,193.99 995.66,195.71 994.67,197.31 994.01,198.04 992.43,199.33 990.52,200.36 988.36,201.09 986.03,201.49 983.63,201.54 981.24,201.24 978.96,200.61 976.88,199.67 975.07,198.44 973.60,196.99 972.54,195.37 971.91,193.64 971.75,191.86 972.07,190.10 972.84,188.44 974.05,186.93 975.63,185.64 977.54,184.60 979.70,183.88 982.03,183.48 984.43,183.43 986.82,183.72 989.10,184.36 991.18,185.30 992.99,186.52 993.77,187.22 995.04,188.77 995.89,190.45Z" fill="#353535" stroke="#111" stroke-width="0.9"/>
<path d="M992.65,191.66 992.59,192.90 992.21,194.10 991.51,195.22 990.53,196.20 989.30,197.02 987.87,197.64 986.29,198.04 983.79,198.18 982.12,197.98 980.52,197.53 979.06,196.87 977.79,196.02 976.77,195.00 976.02,193.86 975.59,192.65 975.47,191.40 975.69,190.18 976.24,189.01 977.08,187.96 978.19,187.05 979.53,186.33 981.04,185.82 982.67,185.54 984.35,185.50 986.02,185.71 987.61,186.15 989.74,187.22 990.89,188.16 991.78,189.24 992.37,190.42Z" fill="#2b2b2b" stroke="#0f0f0f" stroke-width="0.9"/>
<path d="M988.97,191.74 988.94,192.45 988.72,193.13 988.32,193.77 987.76,194.33 986.24,195.16 984.39,195.47 982.49,195.24 980.83,194.48 980.17,193.95 979.66,193.33 979.22,192.30 979.16,191.59 979.42,190.55 979.81,189.91 980.37,189.35 981.89,188.53 983.75,188.21 985.65,188.45 987.31,189.20 987.96,189.74 988.47,190.36 988.81,191.03Z" fill="#3a3a3a" stroke="#141414" stroke-width="0.8"/>
<path d="M986.46,192.75 986.34,193.45 985.86,194.05 985.10,194.46 984.17,194.62 983.22,194.50 982.22,194.00 981.71,193.38 981.56,192.68 981.77,191.99 982.33,191.43 983.15,191.08 983.85,190.99 984.80,191.11 985.63,191.48 986.21,192.06Z" fill="#2a2a2a" stroke="#141414" stroke-width="0.7"/>
<path d="M993.00,174.75 992.94,176.28 992.46,177.77 991.60,179.15 990.39,180.37 988.86,181.39 987.09,182.15 985.14,182.64 983.08,182.84 980.99,182.73 977.99,182.02 976.18,181.20 974.62,180.14 973.35,178.88 972.42,177.48 971.88,175.97 971.75,174.43 971.83,173.66 972.30,172.18 973.17,170.79 974.38,169.57 975.90,168.56 977.68,167.80 979.63,167.30 981.69,167.11 983.77,167.22 985.80,167.62 987.70,168.31 989.40,169.25 990.83,170.41 991.93,171.75 992.66,173.22Z" fill="#cfcfcf" stroke="#1a1a1a" stroke-width="1"/>
<path d="M990.61,173.84 990.56,175.02 990.19,176.17 989.53,177.23 988.60,178.17 987.43,178.95 986.06,179.54 984.56,179.91 982.98,180.06 981.37,179.98 979.81,179.67 978.35,179.14 977.04,178.42 975.49,177.02 974.78,175.94 974.36,174.78 974.26,173.60 974.47,172.43 974.98,171.32 975.78,170.31 976.84,169.45 978.12,168.76 979.56,168.27 981.11,168.01 982.71,167.97 984.30,168.17 985.82,168.59 987.21,169.22 988.42,170.04 989.78,171.54 990.35,172.66Z" fill="#7d7d7d" stroke="#2a2a2a" stroke-width="0.8"/>
<path d="M989.28,172.91 989.23,173.89 988.93,174.84 988.38,175.72 987.61,176.50 986.63,177.15 984.89,177.81 983.60,178.03 982.28,178.06 980.95,177.90 979.69,177.55 978.54,177.03 977.54,176.35 976.73,175.55 976.14,174.65 975.79,173.69 975.71,172.71 976.06,171.27 976.61,170.38 977.39,169.60 978.36,168.96 979.49,168.47 980.74,168.16 982.05,168.03 983.38,168.10 984.68,168.36 985.89,168.80 986.98,169.40 987.89,170.14 988.59,171.00 989.06,171.93Z" fill="#f2f2f2" stroke="#3a3a3a" stroke-width="0.7"/>
<path d="M987.42,171.50 987.39,172.16 987.02,173.10 985.98,174.15 984.46,174.81 982.70,174.98 980.96,174.63 979.50,173.82 978.56,172.67 978.32,172.02 978.27,171.36 978.51,170.39 978.88,169.79 979.40,169.27 980.82,168.50 982.55,168.21 984.32,168.43 985.87,169.13 986.96,170.21 987.28,170.84Z" fill="#222" stroke="#111" stroke-width="0.6"/>
<path d="M985.25,170.94 985.18,171.29 984.94,171.59 984.10,171.87 983.21,171.62 982.87,171.25 982.79,170.90 983.10,170.34 983.94,170.06 984.83,170.30 985.12,170.59Z" fill="#5a5a5a"/>
<path d="M993.77,211.10 993.70,212.64 993.23,214.13 992.37,215.51 991.15,216.73 989.63,217.74 987.86,218.51 985.90,219.00 983.85,219.19 981.76,219.09 978.76,218.37 976.95,217.55 975.38,216.49 974.11,215.24 973.19,213.83 972.65,212.33 972.51,210.78 972.78,209.26 973.45,207.82 974.50,206.51 975.87,205.39 977.53,204.50 978.44,204.15 980.39,203.66 982.45,203.46 984.54,203.57 986.57,203.97 988.47,204.66 990.17,205.60 991.59,206.77 992.69,208.11 993.43,209.57Z" fill="#cfcfcf" stroke="#1a1a1a" stroke-width="1"/>
<path d="M991.38,210.19 991.32,211.37 990.96,212.52 990.30,213.58 989.36,214.52 988.19,215.30 986.83,215.89 985.32,216.27 983.74,216.42 982.14,216.33 980.57,216.02 979.11,215.49 977.81,214.77 976.25,213.37 975.54,212.29 975.13,211.13 975.02,209.95 975.23,208.78 975.75,207.67 976.55,206.66 977.61,205.80 978.88,205.11 980.32,204.63 981.87,204.36 983.47,204.33 985.06,204.53 986.58,204.95 987.97,205.58 989.18,206.39 990.55,207.89 991.11,209.01Z" fill="#7d7d7d" stroke="#2a2a2a" stroke-width="0.8"/>
<path d="M990.04,209.26 990.00,210.24 989.70,211.19 989.15,212.07 988.37,212.85 987.40,213.50 986.27,213.99 985.02,214.30 983.71,214.43 982.38,214.36 981.08,214.10 979.86,213.66 978.78,213.06 977.87,212.32 977.17,211.46 976.70,210.53 976.47,209.06 976.64,208.09 977.07,207.17 977.74,206.33 978.62,205.62 980.26,204.82 981.50,204.51 982.82,204.38 984.15,204.45 985.45,204.71 986.66,205.15 987.74,205.75 988.65,206.49 989.36,207.35 989.83,208.28Z" fill="#f2f2f2" stroke="#3a3a3a" stroke-width="0.7"/>
<path d="M988.19,207.85 988.16,208.51 987.96,209.15 987.58,209.75 987.06,210.27 985.64,211.04 983.91,211.34 982.14,211.12 980.59,210.41 979.50,209.33 979.09,208.38 979.03,207.71 979.15,207.06 979.44,206.44 980.48,205.39 982.00,204.73 983.31,204.56 985.09,204.78 986.64,205.48 987.73,206.56 988.04,207.19Z" fill="#222" stroke="#111" stroke-width="0.6"/>
<path d="M986.01,207.29 985.95,207.64 985.71,207.94 985.33,208.14 984.75,208.22 983.89,207.91 983.64,207.60 983.56,207.25 983.86,206.69 984.70,206.41 985.60,206.66 985.89,206.94Z" fill="#5a5a5a"/>
</g>
<g clip-path="url(#cp3)">
<circle cx="585.8" cy="485.5" r="112.9" fill="#0a0a0a"/>
<circle cx="585.8" cy="485.5" r="107.5" fill="#00ff00"/>
<path d="M660.0,547.9 664.3,542.5 668.1,536.9 669.8,534.0 673.0,528.0 674.4,525.0 677.0,518.7 678.1,515.5 679.0,512.2 680.7,505.7 681.3,502.3 682.3,495.6 682.6,492.3 682.8,485.5 682.6,478.6 646.1,505.1Z" fill="url(#bg3)" stroke="#0a1a0a" stroke-width="1.1"/>
<path d="M640.6,565.5 644.9,562.4 630.1,516.7 601.8,537.3Z" fill="url(#bg3)" stroke="#0a1a0a" stroke-width="1.1"/>
<path d="M549.4,575.4 552.6,576.7 559.1,578.7 565.6,580.4 569.0,581.0 575.7,582.0 582.4,582.4 585.8,582.5 592.6,582.3 595.9,582.0 602.6,581.0 606.0,580.4 612.5,578.7 615.8,577.8 622.2,575.4 585.8,548.9Z" fill="url(#bg3)" stroke="#0a1a0a" stroke-width="1.1"/>
<path d="M526.7,562.4 531.0,565.5 569.8,537.3 541.5,516.7Z" fill="url(#bg3)" stroke="#0a1a0a" stroke-width="1.1"/>
<path d="M489.0,478.6 488.9,482.1 488.9,488.9 489.3,495.6 489.7,499.0 490.9,505.7 491.7,509.0 493.5,515.5 494.6,518.7 497.2,525.0 500.2,531.0 501.8,534.0 503.5,536.9 507.3,542.5 511.6,547.9 525.5,505.1Z" fill="url(#bg3)" stroke="#0a1a0a" stroke-width="1.1"/>
<path d="M494.4,453.0 492.8,458.1 531.6,486.3 542.4,453.0Z" fill="url(#bg3)" stroke="#0a1a0a" stroke-width="1.1"/>
<path d="M562.4,391.4 559.1,392.3 552.6,394.3 546.3,396.9 540.3,399.9 537.3,401.5 534.4,403.2 528.8,407.0 526.1,409.1 520.9,413.4 518.4,415.7 513.7,420.6 511.5,423.1 507.3,428.5 503.5,434.2 548.5,434.2Z" fill="url(#bg3)" stroke="#0a1a0a" stroke-width="1.1"/>
<path d="M588.5,388.5 583.1,388.5 568.3,434.2 603.3,434.2Z" fill="url(#bg3)" stroke="#0a1a0a" stroke-width="1.1"/>
<path d="M668.1,434.2 664.3,428.5 660.1,423.1 657.9,420.6 653.2,415.7 650.7,413.4 645.5,409.1 642.8,407.0 637.2,403.2 634.3,401.5 628.3,398.3 625.3,396.9 622.1,395.6 615.8,393.2 609.2,391.4 623.1,434.2Z" fill="url(#bg3)" stroke="#0a1a0a" stroke-width="1.1"/>
<path d="M678.8,458.1 677.2,453.0 629.2,453.0 640.0,486.3Z" fill="url(#bg3)" stroke="#0a1a0a" stroke-width="1.1"/>
<circle cx="585.8" cy="485.5" r="42.2" fill="#404040" stroke="#0c0c0c" stroke-width="1.1"/>
<circle cx="556.1" cy="471.3" r="2.9" fill="#00f000" stroke="#1a1a1a" stroke-width="0.6"/>
<circle cx="556.1" cy="485.5" r="2.9" fill="#00f000" stroke="#1a1a1a" stroke-width="0.6"/>
<circle cx="556.1" cy="499.7" r="2.9" fill="#00f000" stroke="#1a1a1a" stroke-width="0.6"/>
<circle cx="615.6" cy="471.3" r="2.9" fill="#00f000" stroke="#1a1a1a" stroke-width="0.6"/>
<circle cx="615.6" cy="485.5" r="2.9" fill="#00f000" stroke="#1a1a1a" stroke-width="0.6"/>
<circle cx="615.6" cy="499.7" r="2.9" fill="#00f000" stroke="#1a1a1a" stroke-width="0.6"/>
<circle cx="570" cy="455.5" r="3.1" fill="#00f000" stroke="#1a1a1a" stroke-width="0.6"/>
<circle cx="601.4" cy="455.5" r="3.1" fill="#00f000" stroke="#1a1a1a" stroke-width="0.6"/>
<circle cx="600.2" cy="515.5" r="3.1" fill="#00f000" stroke="#1a1a1a" stroke-width="0.6"/>
<circle cx="585.8" cy="485.5" r="17.5" fill="#3a3a3a" stroke="#0a0a0a" stroke-width="1"/>
<circle cx="585.8" cy="485.5" r="13.6" fill="#333" stroke="#0a0a0a" stroke-width="0.9"/>
<circle cx="585.8" cy="485.5" r="11.3" fill="#2c2c2c" stroke="#141414" stroke-width="1.3"/>
<circle cx="585.8" cy="485.5" r="5.9" fill="#6c6c96" stroke="#111" stroke-width="0.9"/>
<circle cx="585.8" cy="455.4" r="12.9" fill="#e2e2e2" stroke="#1a1a1a" stroke-width="1"/>
<circle cx="585.8" cy="455.4" r="9.4" fill="#c4c4c4" stroke="#2a2a2a" stroke-width="1.3"/>
<circle cx="585.8" cy="455.4" r="6.6" fill="#a9a9a9" stroke="#1e1e1e" stroke-width="1.2"/>
<circle cx="585.8" cy="455.4" r="4.4" fill="#bdbdbd" stroke="#555" stroke-width="0.7"/>
<path d="M583 455.4h5.6M585.8 452.6v5.6" stroke="#fff" stroke-width="1.5"/>
<path d="M587.8 455.6h6" stroke="#444" stroke-width="0.7"/>
<circle cx="582.7" cy="515" r="12.9" fill="#e2e2e2" stroke="#1a1a1a" stroke-width="1"/>
<circle cx="582.7" cy="515" r="9.4" fill="#c4c4c4" stroke="#2a2a2a" stroke-width="1.3"/>
<circle cx="582.7" cy="515" r="6.6" fill="#a9a9a9" stroke="#1e1e1e" stroke-width="1.2"/>
<circle cx="582.7" cy="515" r="4.4" fill="#bdbdbd" stroke="#555" stroke-width="0.7"/>
<path d="M579.9 515h5.6M582.7 512.2v5.6" stroke="#fff" stroke-width="1.5"/>
<path d="M584.7 515.2h6" stroke="#444" stroke-width="0.7"/>
</g>
<g clip-path="url(#cp4)">
<path d="M979.3,405.5 967.4,405.8 955.7,407.1 944.3,409.2 933.4,412.3 923.0,416.1 918.0,418.4 908.7,423.5 900.1,429.3 892.5,435.8 889.1,439.2 883.0,446.6 877.9,454.4 875.9,458.4 874.1,462.6 872.6,466.8 871.4,471.1 870.6,475.4 870.0,479.8 869.3,490.2 869.3,494.7 869.7,499.1 870.4,503.5 871.4,507.9 872.7,512.2 876.2,520.8 880.9,529.1 883.6,533.1 890.0,540.8 897.3,548.0 905.6,554.7 914.7,560.7 924.6,566.0 935.1,570.5 946.2,574.3 951.9,575.8 963.5,578.2 975.3,579.7 987.2,580.3 999.0,580.0 1010.7,578.7 1022.1,576.6 1033.0,573.6 1038.3,571.7 1048.4,567.4 1057.8,562.3 1066.3,556.5 1070.2,553.4 1077.4,546.6 1083.5,539.2 1086.1,535.4 1088.5,531.4 1090.6,527.4 1092.3,523.2 1093.8,519.0 1095.0,514.7 1095.9,510.4 1096.4,506.0 1097.2,495.6 1097.1,491.2 1096.7,486.7 1096.1,482.3 1095.1,477.9 1093.8,473.6 1090.3,465.0 1085.6,456.7 1082.8,452.7 1076.5,445.0 1069.1,437.8 1065.1,434.4 1056.4,428.0 1051.7,425.1 1041.8,419.8 1036.6,417.4 1025.8,413.3 1014.6,410.0 1003.0,407.6 997.1,406.7 991.2,406.1Z" fill="#0aa00a" stroke="#031503" stroke-width="1.2"/>
<path d="M979.8,397.1 973.7,397.1 961.7,397.9 950.0,399.7 938.6,402.3 927.7,405.8 917.4,410.2 907.9,415.4 899.2,421.3 891.4,427.9 887.9,431.4 881.7,438.9 879.0,442.8 876.6,446.8 874.5,451.0 872.7,455.2 871.2,459.5 870.0,463.8 869.1,468.3 868.5,472.7 868.0,480.8 868.0,485.3 868.4,489.8 869.1,494.3 870.1,498.8 871.5,503.2 873.1,507.6 875.0,511.9 879.8,520.4 885.7,528.5 892.7,536.1 900.7,543.2 909.5,549.6 914.3,552.6 924.4,558.0 935.1,562.6 946.3,566.4 958.0,569.3 969.9,571.3 982.0,572.4 994.1,572.5 1006.1,571.7 1012.0,570.9 1023.6,568.8 1034.8,565.7 1040.1,563.8 1050.4,559.4 1055.3,556.9 1064.4,551.4 1072.6,545.1 1076.4,541.7 1083.2,534.5 1088.8,526.8 1091.2,522.8 1093.3,518.6 1095.1,514.4 1096.6,510.1 1097.8,505.8 1098.7,501.4 1099.3,496.9 1099.9,488.8 1099.8,484.3 1099.4,479.8 1098.7,475.3 1097.7,470.8 1096.4,466.4 1094.7,462.0 1092.8,457.7 1090.6,453.4 1085.2,445.1 1082.1,441.2 1075.2,433.5 1067.2,426.5 1062.8,423.2 1053.5,417.0 1043.5,411.6 1038.2,409.2 1027.2,405.0 1015.7,401.7 1009.9,400.3 997.9,398.3 991.9,397.7Z" fill="#0b0b0b" stroke="#000" stroke-width="0.8"/>
<path d="M980.5,391.3 968.6,391.6 956.9,392.9 945.6,395.0 934.6,398.1 924.2,402.0 919.3,404.2 909.9,409.3 901.4,415.1 893.7,421.6 890.3,425.1 884.2,432.4 879.2,440.2 877.1,444.3 875.3,448.4 873.8,452.6 872.7,456.9 871.8,461.2 871.2,465.6 870.6,474.9 870.6,479.3 871.0,483.7 871.7,488.1 872.7,492.5 874.0,496.8 877.5,505.4 882.2,513.7 885.0,517.7 891.3,525.4 898.6,532.7 906.9,539.3 916.1,545.3 925.9,550.6 936.5,555.2 941.9,557.1 953.2,560.4 964.8,562.8 976.6,564.3 988.5,564.9 1000.4,564.6 1012.0,563.4 1023.4,561.2 1034.4,558.2 1044.8,554.3 1054.5,549.6 1059.1,546.9 1067.6,541.1 1071.6,538.0 1078.7,531.2 1084.8,523.9 1087.5,520.0 1089.8,516.1 1091.9,512.0 1093.7,507.9 1095.1,503.6 1096.3,499.4 1097.2,495.0 1097.7,490.7 1098.4,481.4 1098.3,477.0 1098.0,472.6 1097.3,468.2 1096.3,463.8 1095.0,459.4 1091.5,450.8 1086.8,442.5 1084.0,438.5 1077.7,430.8 1070.4,423.6 1066.3,420.2 1057.6,413.8 1052.9,410.9 1043.0,405.6 1037.9,403.3 1027.1,399.1 1015.8,395.8 1004.2,393.4 998.3,392.6 992.4,391.9Z" fill="#0aa40a" stroke="#031503" stroke-width="1.2"/>
<path d="M980.5,391.3 968.6,391.6 956.9,392.9 945.6,395.0 934.6,398.1 924.2,402.0 919.3,404.2 909.9,409.3 901.4,415.1 893.7,421.6 890.3,425.1 884.2,432.4 879.2,440.2 877.1,444.3 875.3,448.4 873.8,452.6 872.7,456.9 871.8,461.2 871.2,465.6 870.8,472.2 870.9,476.6 871.2,481.1 871.9,485.5 872.9,489.9 874.2,494.2 877.7,502.8 882.4,511.1 885.2,515.1 891.5,522.8 898.9,530.0 907.1,536.7 916.3,542.7 926.2,548.0 936.7,552.5 947.7,556.2 959.2,559.1 970.9,561.1 982.8,562.1 994.7,562.3 1006.5,561.5 1018.0,559.8 1023.6,558.6 1034.6,555.5 1039.9,553.7 1049.9,549.4 1059.3,544.3 1063.7,541.5 1071.8,535.3 1075.5,532.0 1082.1,525.0 1087.7,517.4 1090.0,513.4 1092.1,509.4 1093.9,505.2 1095.4,501.0 1096.5,496.7 1097.4,492.4 1098.0,488.0 1098.4,481.4 1098.3,477.0 1098.0,472.6 1097.3,468.2 1096.3,463.8 1095.0,459.4 1091.5,450.8 1086.8,442.5 1084.0,438.5 1077.7,430.8 1070.4,423.6 1066.3,420.2 1057.6,413.8 1052.9,410.9 1043.0,405.6 1037.9,403.3 1027.1,399.1 1015.8,395.8 1004.2,393.4 998.3,392.6 992.4,391.9Z" fill="#0a9c0a" stroke="#031503" stroke-width="1.0"/>
<path d="M1098.0,472.6 1098.4,479.2 1098.4,482.5 1097.8,489.1 1096.5,495.6 1095.6,498.8 1093.2,505.1 1091.8,508.2 1088.5,514.2 1086.6,517.1 1082.3,522.7 1077.4,528.1 1072.0,533.1 1069.1,535.5 1062.8,540.0 1052.6,546.0 1045.2,549.4 1033.4,553.7 1025.2,556.0 1012.5,558.5 1003.7,559.5 990.4,560.1 981.5,559.8 968.1,558.4 955.0,555.9 946.5,553.6 938.2,550.8 926.4,545.8 915.3,539.8 905.2,532.9 899.0,527.8 893.4,522.4 890.9,519.6 886.1,513.9 884.0,510.9 880.1,504.7 876.9,498.4 875.6,495.2 873.4,488.7 871.9,482.1 871.4,478.8 871.0,472.2 871.0,468.9 871.6,462.3 872.9,455.8 874.9,449.5 877.6,443.2 879.2,440.2 882.8,434.3 884.9,431.5 889.5,425.9 894.6,420.8 897.4,418.3 903.4,413.6 909.9,409.3 916.8,405.4 928.0,400.4 936.0,397.7 944.2,395.4 956.9,392.9 970.1,391.6 979.0,391.3 992.4,391.9 1001.3,393.0 1010.0,394.5 1018.6,396.6 1027.1,399.1 1039.2,403.8 1050.5,409.5 1057.6,413.8 1067.3,421.0 1073.2,426.2 1076.0,429.0 1081.0,434.6 1085.4,440.5 1087.4,443.6 1090.9,449.8 1093.8,456.2 1095.0,459.4 1096.8,466.0Z" fill="#0cd00c" stroke="#031503" stroke-width="1.4"/>
<path d="M1067.3,521.6 1072.8,515.1 1077.4,508.3 1079.9,503.5 1082.8,496.1 1084.6,488.5 1085.3,480.7 1084.9,472.9 1084.0,467.6 1048.8,489.1Z" fill="#0a8a0a" stroke="#021002" stroke-width="0.9"/>
<path d="M1085.5,480.7 1085.3,480.6 1085.2,480.7 1084.6,487.7 1084.7,487.8 1084.9,487.7 1085.1,485.9Z" fill="#0c300c"/>
<path d="M1085.5,478.1 1085.3,478.0 1085.2,478.1 1084.1,490.3 1084.3,490.5 1084.4,490.4 1084.9,487.7 1085.5,480.8Z" fill="#0c300c"/>
<path d="M1085.1,472.9 1084.9,472.8 1084.8,472.9 1083.1,493.2 1083.2,494.4 1083.3,494.5 1083.5,494.4 1083.7,493.6 1084.4,490.4 1085.5,478.2Z" fill="#0c300c"/>
<path d="M1084.2,467.7 1084.1,467.6 1083.9,467.7 1082.2,488.0 1083.1,493.2 1083.2,493.3 1083.4,493.2 1085.1,472.9Z" fill="#0c300c"/>
<path d="M1084.2,467.6 1084.0,467.5 1083.9,467.6 1082.2,487.9 1082.3,488.1 1082.5,488.0Z" fill="#0c300c"/>
<path d="M1048.8,488.9 1048.7,489.1 1056.8,503.4 1057.0,503.5 1082.4,488.0 1084.2,467.6 1084.0,467.5Z" fill="#0c620c"/>
<path d="M1067.2,521.6 1072.8,515.1 1076.0,510.6 1078.7,505.9 1081.0,501.1 1083.3,494.4 1082.3,487.9 1056.9,503.3Z" fill="url(#bg4)" stroke="#021002" stroke-width="1.1" stroke-linejoin="round"/>
<path d="M1067.3,521.6 1072.8,515.1 1077.4,508.3 1079.9,503.5 1082.8,496.1 1084.6,488.5 1085.3,480.7 1084.9,472.9 1084.0,467.6 1048.8,489.1Z" fill="none" stroke="#021002" stroke-width="1.3" stroke-linejoin="round"/>
<path d="M1048.8,535.7 1053.0,533.2 1033.4,498.5 1006.0,515.1Z" fill="#0a8a0a" stroke="#021002" stroke-width="0.9"/>
<path d="M1033.5,498.4 1033.4,498.3 1033.2,498.4 1031.5,518.8 1038.3,530.8 1048.8,535.8 1053.0,533.3 1053.1,533.1Z" fill="#0c3c0c"/>
<path d="M1006.0,515.0 1006.0,515.2 1023.7,523.7 1031.8,518.7 1033.5,498.4 1033.3,498.3Z" fill="#0c620c"/>
<path d="M1038.4,530.7 1031.7,518.7 1023.6,523.6Z" fill="url(#bg4)" stroke="#021002" stroke-width="1.1" stroke-linejoin="round"/>
<path d="M1048.8,535.7 1053.0,533.2 1033.4,498.5 1006.0,515.1Z" fill="none" stroke="#021002" stroke-width="1.3" stroke-linejoin="round"/>
<path d="M955.5,545.9 962.3,547.5 972.7,549.3 983.2,550.2 993.7,550.3 1004.1,549.6 1014.3,548.1 1024.2,545.8 1030.7,543.8 990.6,524.5Z" fill="#0a8a0a" stroke="#021002" stroke-width="0.9"/>
<path d="M955.3,545.8 955.3,546.1 958.8,546.9 965.7,548.4 972.6,549.4 980.2,550.2 989.0,544.8 990.7,524.4 990.5,524.4Z" fill="#0c620c"/>
<path d="M990.6,524.4 990.4,524.5 988.8,544.9 999.8,550.2 1007.6,549.4 1014.4,548.3 1024.3,546.0 1030.8,543.9 1030.8,543.7Z" fill="#0c7f0c"/>
<path d="M980.1,550.0 990.2,550.4 999.8,550.0 988.8,544.7Z" fill="url(#bg4)" stroke="#021002" stroke-width="1.1" stroke-linejoin="round"/>
<path d="M955.5,545.9 962.3,547.5 972.7,549.3 983.2,550.2 993.7,550.3 1004.1,549.6 1014.3,548.1 1024.2,545.8 1030.7,543.8 990.6,524.5Z" fill="none" stroke="#021002" stroke-width="1.3" stroke-linejoin="round"/>
<path d="M930.7,536.5 935.5,538.8 973.0,516.0 941.8,501.0Z" fill="#0a8a0a" stroke="#021002" stroke-width="0.9"/>
<path d="M930.6,536.5 930.6,536.7 933.0,537.9 934.6,538.6 934.8,538.5 940.2,521.3 942.0,501.0 941.8,500.8 941.7,500.9Z" fill="#0c300c"/>
<path d="M941.9,500.9 941.7,501.0 940.0,521.4 953.7,527.9 973.1,516.1 973.0,515.9Z" fill="#0c7f0c"/>
<path d="M935.5,538.8 953.6,527.8 940.1,521.2 934.7,538.5Z" fill="url(#bg4)" stroke="#021002" stroke-width="1.1" stroke-linejoin="round"/>
<path d="M930.7,536.5 935.5,538.8 973.0,516.0 941.8,501.0Z" fill="none" stroke="#021002" stroke-width="1.3" stroke-linejoin="round"/>
<path d="M884.1,473.3 884.8,481.1 886.7,488.8 889.6,496.4 892.1,501.4 896.8,508.6 902.4,515.4 908.9,521.8 913.8,525.9 924.2,492.5Z" fill="#0a8a0a" stroke="#021002" stroke-width="0.9"/>
<path d="M884.1,473.0 884.0,473.1 883.9,473.3 884.3,478.5 885.2,483.7 885.8,486.3 887.4,491.4 889.8,497.2 918.6,510.9 924.3,492.4Z" fill="#0c7f0c"/>
<path d="M889.9,497.1 895.1,506.2 900.4,513.2 906.6,519.7 913.8,525.9 918.5,510.8Z" fill="url(#bg4)" stroke="#021002" stroke-width="1.1" stroke-linejoin="round"/>
<path d="M884.1,473.3 884.8,481.1 886.7,488.8 889.6,496.4 892.1,501.4 896.8,508.6 902.4,515.4 908.9,521.8 913.8,525.9 924.2,492.5Z" fill="none" stroke="#021002" stroke-width="1.3" stroke-linejoin="round"/>
<path d="M887.2,453.3 886.0,457.3 928.8,477.9 936.9,451.9Z" fill="#0a8a0a" stroke="#021002" stroke-width="0.9"/>
<path d="M885.9,457.2 886.3,457.6 886.5,457.5 886.7,455.3 886.6,455.1 886.4,455.2Z" fill="#0c300c"/>
<path d="M886.4,455.2 886.3,457.5 886.9,457.8 887.0,457.7 887.4,453.3 887.3,453.2 887.1,453.2Z" fill="#0c300c"/>
<path d="M887.2,453.2 887.1,453.3 886.8,457.8 918.0,472.8 930.6,472.4 937.0,451.9 936.9,451.8Z" fill="#0c930c"/>
<path d="M928.8,477.9 930.5,472.3 917.9,472.6Z" fill="url(#bg4)" stroke="#021002" stroke-width="1.1" stroke-linejoin="round"/>
<path d="M887.2,453.3 886.0,457.3 928.8,477.9 936.9,451.9Z" fill="none" stroke="#021002" stroke-width="1.3" stroke-linejoin="round"/>
<path d="M951.7,403.9 942.0,406.5 935.7,408.6 926.8,412.4 918.5,416.9 910.9,422.1 904.2,427.8 898.3,434.1 894.9,438.6 941.4,437.3Z" fill="#0a8a0a" stroke="#021002" stroke-width="0.9"/>
<path d="M894.7,438.5 894.8,438.7 895.0,438.6 895.0,438.4Z" fill="#0c320c"/>
<path d="M898.2,434.0 894.8,438.4 894.8,438.7 898.1,438.6 898.4,434.0Z" fill="#0c3c0c"/>
<path d="M902.0,429.7 898.2,434.0 897.8,438.5 897.9,438.6 901.4,438.5 901.5,438.4 902.2,429.7Z" fill="#0c450c"/>
<path d="M906.3,425.7 902.0,429.8 901.2,438.4 901.4,438.5 905.3,438.4 905.4,438.3 906.5,425.7Z" fill="#0c4f0c"/>
<path d="M910.8,422.0 906.2,425.8 905.1,438.3 905.2,438.4 912.0,438.2 913.5,420.2 913.3,420.2Z" fill="#0c590c"/>
<path d="M918.4,416.8 913.2,420.3 911.7,438.1 911.8,438.3 915.5,438.2 916.9,437.2 918.6,416.9Z" fill="#0c620c"/>
<path d="M923.9,413.7 918.4,416.9 916.6,437.2 916.7,437.3 925.2,432.7 926.9,412.4 926.7,412.3Z" fill="#0c6c0c"/>
<path d="M932.6,409.7 926.6,412.4 924.9,432.7 925.0,432.8 934.1,428.9 935.8,408.6 935.7,408.5Z" fill="#0c760c"/>
<path d="M941.9,406.4 935.6,408.6 933.8,428.9 933.9,429.0 943.6,425.9 945.3,405.5 945.1,405.4Z" fill="#0c7f0c"/>
<path d="M951.9,403.8 945.0,405.5 943.3,425.8 943.4,426.0 945.3,425.4 952.0,404.0Z" fill="#0c890c"/>
<path d="M941.4,437.3 945.1,425.4 937.1,427.8 930.9,430.1 922.2,434.1 915.5,438.0Z" fill="url(#bg4)" stroke="#021002" stroke-width="1.1" stroke-linejoin="round"/>
<path d="M951.7,403.9 942.0,406.5 935.7,408.6 926.8,412.4 918.5,416.9 910.9,422.1 904.2,427.8 898.3,434.1 894.9,438.6 941.4,437.3Z" fill="none" stroke="#021002" stroke-width="1.3" stroke-linejoin="round"/>
<path d="M978.5,401.0 972.9,401.2 961.9,436.7 998.0,435.7Z" fill="#0a8a0a" stroke="#021002" stroke-width="0.9"/>
<path d="M961.7,436.7 961.9,436.9 966.6,436.6 971.4,421.4 973.1,401.2 973.0,401.0 972.8,401.1Z" fill="#0c300c"/>
<path d="M978.6,400.9 978.4,400.9 978.3,401.0 976.6,421.3 985.0,436.2 998.1,435.9 998.2,435.7Z" fill="#0c3c0c"/>
<path d="M978.5,400.9 972.9,401.0 972.8,401.1 971.1,421.4 971.2,421.6 976.7,421.4 976.9,421.3 978.6,401.0Z" fill="#0c930c"/>
<path d="M985.1,436.1 976.7,421.3 971.2,421.4 966.5,436.6Z" fill="url(#bg4)" stroke="#021002" stroke-width="1.1" stroke-linejoin="round"/>
<path d="M978.5,401.0 972.9,401.2 961.9,436.7 998.0,435.7Z" fill="none" stroke="#021002" stroke-width="1.3" stroke-linejoin="round"/>
<path d="M1064.9,433.8 1058.1,427.6 1050.6,421.9 1042.2,416.7 1036.3,413.7 1027.0,409.7 1017.2,406.4 1007.1,403.9 1000.1,402.6 1018.5,435.2Z" fill="#0a8a0a" stroke="#021002" stroke-width="0.9"/>
<path d="M1065.0,433.7 1064.8,433.7 1064.9,434.0 1065.1,433.9Z" fill="#0c590c"/>
<path d="M1060.6,429.5 1060.4,429.6 1060.0,434.1 1065.0,434.0 1065.0,433.7Z" fill="#0c620c"/>
<path d="M1053.2,423.6 1053.0,423.7 1052.1,434.3 1060.2,434.1 1060.6,429.5 1058.2,427.4Z" fill="#0c6c0c"/>
<path d="M1045.1,418.2 1044.9,418.4 1043.6,434.5 1052.3,434.4 1053.3,423.6 1050.6,421.7Z" fill="#0c760c"/>
<path d="M1036.4,413.5 1036.2,413.7 1034.5,434.0 1036.1,434.8 1043.7,434.6 1045.2,418.3 1042.3,416.6Z" fill="#0c7f0c"/>
<path d="M1020.6,407.2 1020.4,407.4 1018.7,427.7 1025.2,430.1 1034.7,434.1 1036.5,413.6 1030.2,410.8Z" fill="#0c890c"/>
<path d="M1000.1,402.4 1000.0,402.7 1013.2,426.1 1018.9,427.8 1020.7,407.3 1017.3,406.2 1010.6,404.5Z" fill="#0c930c"/>
<path d="M1018.5,435.2 1036.1,434.7 1025.3,429.9 1018.8,427.6 1013.3,426.0Z" fill="url(#bg4)" stroke="#021002" stroke-width="1.1" stroke-linejoin="round"/>
<path d="M1064.9,433.8 1058.1,427.6 1050.6,421.9 1042.2,416.7 1036.3,413.7 1027.0,409.7 1017.2,406.4 1007.1,403.9 1000.1,402.6 1018.5,435.2Z" fill="none" stroke="#021002" stroke-width="1.3" stroke-linejoin="round"/>
<path d="M1078.3,451.9 1076.1,448.1 1026.5,449.5 1040.8,474.8Z" fill="#0a8a0a" stroke="#021002" stroke-width="0.9"/>
<path d="M1077.4,449.9 1077.2,449.8 1077.1,450.0 1076.9,452.7 1077.0,452.9 1078.4,452.0Z" fill="#0c3c0c"/>
<path d="M1077.4,450.0 1076.1,447.9 1076.0,448.1 1075.5,453.5 1075.6,453.7 1077.2,452.7Z" fill="#0c450c"/>
<path d="M1026.5,449.3 1026.4,449.5 1037.7,469.5 1050.4,469.1 1075.7,453.7 1076.3,448.1 1076.1,447.9Z" fill="#0c930c"/>
<path d="M1040.8,474.8 1050.3,469.0 1037.7,469.3Z" fill="url(#bg4)" stroke="#021002" stroke-width="1.1" stroke-linejoin="round"/>
<path d="M1078.3,451.9 1076.1,448.1 1026.5,449.5 1040.8,474.8Z" fill="none" stroke="#021002" stroke-width="1.3" stroke-linejoin="round"/>
<path d="M1004.90,475.75 1004.97,477.72 1004.68,479.67 1004.06,481.56 1003.10,483.36 1001.82,485.04 1000.26,486.58 998.42,487.93 996.35,489.09 994.08,490.03 991.65,490.73 989.09,491.19 986.47,491.39 983.81,491.33 981.16,491.02 978.58,490.46 976.10,489.65 973.76,488.61 971.61,487.37 969.69,485.93 968.02,484.33 966.63,482.60 965.55,480.75 964.80,478.83 964.39,476.87 964.33,474.89 964.61,472.95 965.24,471.05 966.20,469.25 967.47,467.57 969.04,466.04 970.87,464.68 972.95,463.53 975.22,462.59 977.65,461.88 980.20,461.43 982.83,461.23 985.49,461.28 988.13,461.59 990.72,462.16 993.20,462.97 995.54,464.00 997.68,465.25 999.61,466.68 1001.28,468.28 1002.66,470.02 1003.74,471.86 1004.49,473.78Z" fill="#1a1a1a" stroke="#000" stroke-width="1"/>
<path d="M1005.06,473.92 1005.12,475.90 1004.84,477.85 1004.21,479.74 1003.25,481.54 1001.98,483.22 1000.41,484.75 998.58,486.11 996.51,487.27 994.24,488.21 991.80,488.91 989.25,489.37 986.62,489.57 983.96,489.51 981.32,489.20 978.73,488.63 976.25,487.83 973.92,486.79 971.77,485.55 969.84,484.11 968.17,482.51 966.79,480.78 965.71,478.93 964.96,477.01 964.55,475.05 964.49,473.07 964.77,471.12 965.40,469.23 966.35,467.43 967.63,465.75 969.20,464.22 971.03,462.86 973.10,461.70 975.37,460.77 977.81,460.06 980.36,459.61 982.99,459.40 985.64,459.46 988.29,459.77 990.88,460.34 993.36,461.14 995.69,462.18 997.84,463.42 999.77,464.86 1001.44,466.46 1002.82,468.20 1003.90,470.04 1004.65,471.96Z" fill="#262626" stroke="#0a0a0a" stroke-width="0.8"/>
<path d="M998.45,474.11 998.49,475.44 998.30,476.75 997.88,478.02 997.23,479.24 996.37,480.37 995.32,481.40 994.08,482.31 992.69,483.09 991.16,483.73 989.52,484.20 987.80,484.51 986.03,484.64 984.24,484.61 982.46,484.39 980.72,484.01 979.04,483.47 977.47,482.77 976.02,481.93 974.73,480.97 973.60,479.89 972.67,478.72 971.95,477.48 971.44,476.19 971.16,474.86 971.12,473.53 971.31,472.22 971.73,470.95 972.38,469.73 973.24,468.60 974.29,467.57 975.53,466.66 976.92,465.88 978.45,465.25 980.09,464.77 981.81,464.46 983.58,464.33 985.37,464.37 987.15,464.58 988.89,464.96 990.56,465.50 992.14,466.20 993.58,467.04 994.88,468.00 996.01,469.08 996.94,470.25 997.66,471.49 998.17,472.79Z" fill="#2e2e2e" stroke="#0c0c0c" stroke-width="0.9"/>
<path d="M995.96,476.60 996.00,477.71 995.84,478.80 995.49,479.86 994.95,480.87 994.24,481.82 993.36,482.68 992.33,483.44 989.89,484.61 988.52,485.01 987.09,485.27 984.12,485.35 981.19,484.86 979.80,484.40 977.28,483.12 976.20,482.32 975.26,481.42 974.48,480.44 973.88,479.41 973.46,478.33 973.23,477.23 973.19,476.12 973.35,475.03 973.70,473.97 974.24,472.95 974.96,472.01 975.84,471.15 976.87,470.39 979.30,469.21 980.67,468.82 982.10,468.56 985.07,468.48 986.55,468.66 989.40,469.43 991.91,470.71 992.99,471.51 993.93,472.41 994.71,473.38 995.31,474.42 995.73,475.50Z" fill="#252525" stroke="#111" stroke-width="0.8"/>
<path d="M991.51,478.04 991.68,479.44 991.35,480.81 990.56,482.06 990.00,482.61 988.60,483.50 987.79,483.84 986.01,484.25 985.07,484.33 983.18,484.19 982.25,483.99 981.37,483.70 979.77,482.89 979.08,482.38 977.99,481.18 977.33,479.84 977.17,478.43 977.49,477.06 977.83,476.42 978.29,475.82 979.50,474.79 981.05,474.04 981.92,473.79 983.77,473.55 985.67,473.68 986.59,473.89 987.48,474.17 989.08,474.99 989.77,475.50 990.86,476.69Z" fill="#303030" stroke="#111" stroke-width="0.8"/>
<path d="M988.07,479.65 987.92,480.71 987.22,481.63 986.08,482.27 985.17,482.48 984.20,482.51 982.78,482.20 981.60,481.52 980.85,480.56 980.62,479.49 980.96,478.45 981.82,477.61 983.07,477.10 984.51,476.99 985.92,477.30 986.75,477.72 987.66,478.59Z" fill="#262626" stroke="#111" stroke-width="0.7"/>
<path d="M987.37,451.38 987.38,451.86 987.16,452.78 986.25,453.98 985.32,454.58 984.19,454.98 982.31,455.12 980.46,454.72 978.92,453.83 977.93,452.58 977.75,452.12 977.64,451.18 977.86,450.26 978.09,449.83 979.21,448.73 980.25,448.23 982.07,447.90 983.97,448.12 985.64,448.87 986.83,450.01Z" fill="#cfcfcf" stroke="#1e1e1e" stroke-width="1"/>
<path d="M995.69,498.02 995.70,498.49 995.48,499.41 994.57,500.61 993.09,501.44 991.27,501.77 989.37,501.54 987.70,500.80 986.51,499.66 986.07,498.76 985.96,497.81 986.18,496.89 986.40,496.46 987.53,495.36 989.15,494.69 991.03,494.55 992.88,494.95 994.42,495.84 995.41,497.09Z" fill="#cfcfcf" stroke="#1e1e1e" stroke-width="1"/>
</g>
<path d="M387.5 94V620" stroke="#b5b3ae" stroke-width="1"/>
<path d="M785.5 94V620" stroke="#8f8d89" stroke-width="1.6"/>
<path d="M387 333.3H1183" stroke="#a09e9a" stroke-width="1.2"/>
<path d="M387 619.6H1183" stroke="#8f8d89" stroke-width="1.2"/>
<path d="M1182.8 94V620" stroke="#b5b3ae" stroke-width="1"/>
<rect x="390.3" y="94.3" width="391.4" height="235.4" fill="none" stroke="#2c2c55" stroke-opacity="0.35" stroke-width="0.6"/>
<rect x="789.3" y="94.3" width="390.4" height="235.4" fill="none" stroke="#2c2c55" stroke-opacity="0.35" stroke-width="0.6"/>
<rect x="390.3" y="355.3" width="391.4" height="261.4" fill="none" stroke="#2c2c55" stroke-opacity="0.35" stroke-width="0.6"/>
<rect x="789.3" y="355.3" width="390.4" height="261.4" fill="none" stroke="#2c2c55" stroke-opacity="0.35" stroke-width="0.6"/>
<g clip-path="url(#cp1)"><path d="M768.8 308.6L768.8 317.6" stroke="#1c1cb4" stroke-width="1.5"/><path d="M769.2 317.3L777.3 317.3" stroke="#b41c1c" stroke-width="1.3"/><rect x="768" y="317.2" width="1" height="1" fill="#1c9c1c"/><text x="770.7" y="308.7" font-family="Liberation Sans,sans-serif" font-size="9.1" fill="#17171c">Z</text><text x="770.6" y="317.5" font-family="Liberation Sans,sans-serif" font-size="9.1" fill="#17171c">Y</text><text x="779.4" y="317.6" font-family="Liberation Sans,sans-serif" font-size="9.1" fill="#17171c">X</text></g>
<g clip-path="url(#cp2)"><path d="M1167.7 309.3L1166.6 317.4" stroke="#1c1cb4" stroke-width="1.5"/><path d="M1166.8 317.3L1175.2 317.3" stroke="#b41c1c" stroke-width="1.3"/><path d="M1164.8 312.8L1166.4 312.6" stroke="#1c9c1c" stroke-width="1.2"/><text x="1168.6" y="310.6" font-family="Liberation Sans,sans-serif" font-size="9.1" fill="#17171c" transform="rotate(-8 1171 307)">Z</text><text x="1177.8" y="317.6" font-family="Liberation Sans,sans-serif" font-size="9.1" fill="#17171c">X</text></g>
<g clip-path="url(#cp3)"><path d="M768.8 594.4L768.8 603.6" stroke="#1c9c1c" stroke-width="1.5"/><path d="M769.2 603.3L777.3 603.3" stroke="#b41c1c" stroke-width="1.3"/><rect x="768" y="603" width="1.6" height="1.4" fill="#1c1cb4"/><text x="770.6" y="595.4" font-family="Liberation Sans,sans-serif" font-size="9.1" fill="#17171c">Y</text><text x="770.7" y="604.2" font-family="Liberation Sans,sans-serif" font-size="9.1" fill="#17171c">Z</text><text x="779.4" y="604" font-family="Liberation Sans,sans-serif" font-size="9.1" fill="#17171c">X</text></g>
<g clip-path="url(#cp4)"><path d="M1166.9 598L1166.9 603.4" stroke="#1c9c1c" stroke-width="1.5"/><path d="M1166.9 603.2L1166.9 608.5" stroke="#1c1cb4" stroke-width="1.5"/><path d="M1158 603.9L1166.4 603.9" stroke="#b41c1c" stroke-width="1.3"/><text x="1159.8" y="603.4" font-family="Liberation Sans,sans-serif" font-size="8" fill="#17171c">X</text><text x="1167.8" y="599" font-family="Liberation Sans,sans-serif" font-size="9.1" fill="#17171c">Y</text><text x="1169" y="608.5" font-family="Liberation Sans,sans-serif" font-size="9.1" fill="#17171c">Z</text></g>
</svg>
<div class="a" style="left:387px;top:335px;width:398px;height:20px;background:linear-gradient(#fefefe 0,#f6f6f5 45%,#ebebea 55%,#f1f0ef 100%);border-radius:4px 4px 0 0;border-bottom:1px solid #d9d7d3"></div>
<svg style="left:391.1px;top:337.1px" width="15" height="14" viewBox="0 0 15 14"><path d="M0.6 0.8h7v3h-4v2.2h2.6v2.8h-2.6v3.8h-3z" fill="#f23a14"/><path d="M0.6 0.8h1.3v11.8h-1.3z" fill="#c81808" opacity="0.8"/><path d="M13.13 9.43L14.49 10.19L14.03 11.31L12.53 10.89L11.49 11.93L11.91 13.43L10.79 13.89L10.03 12.53L8.57 12.53L7.81 13.89L6.69 13.43L7.11 11.93L6.07 10.89L4.57 11.31L4.11 10.19L5.47 9.43L5.47 7.97L4.11 7.21L4.57 6.09L6.07 6.51L7.11 5.47L6.69 3.97L7.81 3.51L8.57 4.87L10.03 4.87L10.79 3.51L11.91 3.97L11.49 5.47L12.53 6.51L14.03 6.09L14.49 7.21L13.13 7.97Z" fill="#1a3cb0" stroke="#0a1a70" stroke-width="0.5" stroke-linejoin="round"/><circle cx="9.3" cy="8.7" r="1.6" fill="#e8eeff"/></svg>
<span class="t" style="left:448.87px;top:339.00px;font-size:13px;font-weight:700;color:#333;transform:scaleX(0.9769);">Renacuajo-wheel-pentacle-assembly : 3</span>
<div class="a" style="left:729px;top:336px;width:16px;height:16px;background:linear-gradient(#fbfbfb,#e9e9e8);border:1px solid #c9c7c3;border-radius:3.5px"><svg style="left:-1px;top:-1px" width="16" height="16" viewBox="0 0 16 16"><path d="M4.2 11h7" stroke="#111" stroke-width="2"/></svg></div>
<div class="a" style="left:746.5px;top:336px;width:16px;height:16px;background:linear-gradient(#fbfbfb,#e9e9e8);border:1px solid #c9c7c3;border-radius:3.5px"><svg style="left:-1px;top:-1px" width="16" height="16" viewBox="0 0 16 16"><rect x="4.6" y="5" width="6.2" height="6" fill="none" stroke="#111" stroke-width="1.2"/><path d="M4.2 5.3h7" stroke="#111" stroke-width="1.6"/></svg></div>
<div class="a" style="left:764px;top:336px;width:16px;height:16px;background:linear-gradient(#fbfbfb,#e9e9e8);border:1px solid #c9c7c3;border-radius:3.5px"><svg style="left:-1px;top:-1px" width="16" height="16" viewBox="0 0 16 16"><path d="M4.6 4.8l6.4 6.4M11 4.8l-6.4 6.4" stroke="#111" stroke-width="2"/></svg></div>
<div class="a" style="left:785.5px;top:334.5px;width:398px;height:20.5px;background:linear-gradient(#f4905e 0,#ef7d49 40%,#e6703e 55%,#ea7743 100%);border-radius:4.5px 4.5px 0 0;border-bottom:1px solid #b8532a;border-top:1px solid #c8683f"></div>
<svg style="left:789.8px;top:337.1px" width="15" height="14" viewBox="0 0 15 14"><path d="M0.6 0.8h7v3h-4v2.2h2.6v2.8h-2.6v3.8h-3z" fill="#f23a14"/><path d="M0.6 0.8h1.3v11.8h-1.3z" fill="#c81808" opacity="0.8"/><path d="M13.13 9.43L14.49 10.19L14.03 11.31L12.53 10.89L11.49 11.93L11.91 13.43L10.79 13.89L10.03 12.53L8.57 12.53L7.81 13.89L6.69 13.43L7.11 11.93L6.07 10.89L4.57 11.31L4.11 10.19L5.47 9.43L5.47 7.97L4.11 7.21L4.57 6.09L6.07 6.51L7.11 5.47L6.69 3.97L7.81 3.51L8.57 4.87L10.03 4.87L10.79 3.51L11.91 3.97L11.49 5.47L12.53 6.51L14.03 6.09L14.49 7.21L13.13 7.97Z" fill="#1a3cb0" stroke="#0a1a70" stroke-width="0.5" stroke-linejoin="round"/><circle cx="9.3" cy="8.7" r="1.6" fill="#f0c8b0"/></svg>
<span class="t" style="left:846.77px;top:339.00px;font-size:13px;font-weight:700;color:#fff;transform:scaleX(0.9764);text-shadow:0.6px 1px 0.5px #8a3d1c">Renacuajo-wheel-pentacle-assembly : 1</span>
<div class="a" style="left:1127.5px;top:336px;width:16px;height:16px;background:linear-gradient(#f08858,#e06c3c);border:1px solid #b8552c;border-radius:3.5px"><svg style="left:-1px;top:-1px" width="16" height="16" viewBox="0 0 16 16"><path d="M4.2 11h7" stroke="#fff" stroke-width="2"/></svg></div>
<div class="a" style="left:1145px;top:336px;width:16px;height:16px;background:linear-gradient(#f08858,#e06c3c);border:1px solid #b8552c;border-radius:3.5px"><svg style="left:-1px;top:-1px" width="16" height="16" viewBox="0 0 16 16"><rect x="4.6" y="5" width="6.2" height="6" fill="none" stroke="#fff" stroke-width="1.2"/><path d="M4.2 5.3h7" stroke="#fff" stroke-width="1.6"/></svg></div>
<div class="a" style="left:1162.5px;top:336px;width:16px;height:16px;background:linear-gradient(#f08858,#e06c3c);border:1px solid #b8552c;border-radius:3.5px"><svg style="left:-1px;top:-1px" width="16" height="16" viewBox="0 0 16 16"><path d="M4.6 4.8l6.4 6.4M11 4.8l-6.4 6.4" stroke="#fff" stroke-width="2"/></svg></div>
<div class="a" style="left:387px;top:620px;width:797px;height:29px;background:linear-gradient(#e9e8e6,#f0efee 40%,#f2f1f0);"></div>
<div class="a" style="left:0;top:0;width:1160px;height:675px;overflow:hidden"><div class="a" style="left:956px;top:621px;width:232px;height:25px;background:linear-gradient(#ebeae8,#f3f2f1);border:1px solid #cbc9c4;border-top:none;border-radius:0 0 4px 4px"></div><svg style="left:962.3px;top:626.5px" width="13.5" height="12.6" viewBox="0 0 15 14"><path d="M0.6 0.8h7v3h-4v2.2h2.6v2.8h-2.6v3.8h-3z" fill="#f23a14"/><path d="M0.6 0.8h1.3v11.8h-1.3z" fill="#c81808" opacity="0.8"/><path d="M13.13 9.43L14.49 10.19L14.03 11.31L12.53 10.89L11.49 11.93L11.91 13.43L10.79 13.89L10.03 12.53L8.57 12.53L7.81 13.89L6.69 13.43L7.11 11.93L6.07 10.89L4.57 11.31L4.11 10.19L5.47 9.43L5.47 7.97L4.11 7.21L4.57 6.09L6.07 6.51L7.11 5.47L6.69 3.97L7.81 3.51L8.57 4.87L10.03 4.87L10.79 3.51L11.91 3.97L11.49 5.47L12.53 6.51L14.03 6.09L14.49 7.21L13.13 7.97Z" fill="#1a3cb0" stroke="#0a1a70" stroke-width="0.5" stroke-linejoin="round"/><circle cx="9.3" cy="8.7" r="1.6" fill="#e8eeff"/></svg><span class="t" style="left:982.28px;top:627.00px;font-size:13px;transform:scaleX(0.9798);">Renacuajo-wheel-pentacle-assembly : 3</span></div>
<div class="a" style="left:670.5px;top:621px;width:284.5px;height:25px;background:linear-gradient(#ebeae8,#f3f2f1);border:1px solid #cbc9c4;border-top:none;border-radius:0 0 4px 4px"></div><svg style="left:677px;top:626.5px" width="13.5" height="12.6" viewBox="0 0 15 14"><path d="M0.6 0.8h7v3h-4v2.2h2.6v2.8h-2.6v3.8h-3z" fill="#f23a14"/><path d="M0.6 0.8h1.3v11.8h-1.3z" fill="#c81808" opacity="0.8"/><path d="M13.13 9.43L14.49 10.19L14.03 11.31L12.53 10.89L11.49 11.93L11.91 13.43L10.79 13.89L10.03 12.53L8.57 12.53L7.81 13.89L6.69 13.43L7.11 11.93L6.07 10.89L4.57 11.31L4.11 10.19L5.47 9.43L5.47 7.97L4.11 7.21L4.57 6.09L6.07 6.51L7.11 5.47L6.69 3.97L7.81 3.51L8.57 4.87L10.03 4.87L10.79 3.51L11.91 3.97L11.49 5.47L12.53 6.51L14.03 6.09L14.49 7.21L13.13 7.97Z" fill="#1a3cb0" stroke="#0a1a70" stroke-width="0.5" stroke-linejoin="round"/><circle cx="9.3" cy="8.7" r="1.6" fill="#e8eeff"/></svg><span class="t" style="left:696.98px;top:627.00px;font-size:13px;transform:scaleX(0.9825);">Renacuajo-wheel-pentacle-assembly : 2</span><svg style="left:934.5px;top:628.5px" width="11" height="11" viewBox="0 0 11 11"><path d="M2 2l7 7M9 2l-7 7" stroke="#5a5955" stroke-width="2.9" stroke-linecap="butt"/></svg>
<div class="a" style="left:386.6px;top:620px;width:283.8px;height:28.4px;background:#fcfcfb;border:1px solid #c2c0bb;border-top:none;border-radius:0 0 4px 4px"></div><svg style="left:392.5px;top:627px" width="13.5" height="12.6" viewBox="0 0 15 14"><path d="M0.6 0.8h7v3h-4v2.2h2.6v2.8h-2.6v3.8h-3z" fill="#f23a14"/><path d="M0.6 0.8h1.3v11.8h-1.3z" fill="#c81808" opacity="0.8"/><path d="M13.13 9.43L14.49 10.19L14.03 11.31L12.53 10.89L11.49 11.93L11.91 13.43L10.79 13.89L10.03 12.53L8.57 12.53L7.81 13.89L6.69 13.43L7.11 11.93L6.07 10.89L4.57 11.31L4.11 10.19L5.47 9.43L5.47 7.97L4.11 7.21L4.57 6.09L6.07 6.51L7.11 5.47L6.69 3.97L7.81 3.51L8.57 4.87L10.03 4.87L10.79 3.51L11.91 3.97L11.49 5.47L12.53 6.51L14.03 6.09L14.49 7.21L13.13 7.97Z" fill="#1a3cb0" stroke="#0a1a70" stroke-width="0.5" stroke-linejoin="round"/><circle cx="9.3" cy="8.7" r="1.6" fill="#e8eeff"/></svg><span class="t" style="left:412.68px;top:628.00px;font-size:13px;transform:scaleX(0.9801);">Renacuajo-wheel-pentacle-assembly : 1</span><svg style="left:649.5px;top:629px" width="11" height="11" viewBox="0 0 11 11"><path d="M2 2l7 7M9 2l-7 7" stroke="#5a5955" stroke-width="2.9" stroke-linecap="butt"/></svg>
<div class="a" style="left:1150px;top:621px;width:34px;height:27px;background:linear-gradient(90deg,rgba(240,239,238,0),#f0efee 30%);"></div>
<div class="a" style="left:1157px;top:621.5px;width:10.5px;height:25.5px;background:linear-gradient(#ffffff,#f8f8f7);border-radius:3px;box-shadow:0 0 0 0.7px #e0deda"><svg style="left:0;top:0" width="10.5" height="26" viewBox="0 0 10.5 26"><path d="M6.8 9.5v8l-4.6-4z" fill="#c2c0bc"/></svg></div>
<div class="a" style="left:1171px;top:621.5px;width:10.5px;height:25.5px;background:linear-gradient(#ffffff,#f8f8f7);border-radius:3px;box-shadow:0 0 0 0.7px #e0deda"><svg style="left:0;top:0" width="10.5" height="26" viewBox="0 0 10.5 26"><path d="M3.6 9.5v8l4.6-4z" fill="#8a8884"/></svg></div>
<div class="a" style="left:1183.5px;top:94px;width:10.5px;height:555px;background:#f4f3f2;"></div>
<svg style="left:1183px;top:94px" width="12" height="555" viewBox="0 0 12 555"><defs><linearGradient id="sbg" x1="0" y1="0" x2="1" y2="0"><stop offset="0" stop-color="#d9d7d3"/><stop offset="0.35" stop-color="#e6e5e2"/><stop offset="1" stop-color="#efeeec"/></linearGradient><linearGradient id="sbv" x1="0" y1="0" x2="0" y2="1"><stop offset="0" stop-color="#fff" stop-opacity="0"/><stop offset="0.5" stop-color="#fff" stop-opacity="0.15"/><stop offset="1" stop-color="#fff" stop-opacity="0.75"/></linearGradient></defs><path d="M0.8 0v555" stroke="#aaa8a3" stroke-width="1"/><path d="M1.5 6Q1.5 0.5 6.3 0.5T11 6V549Q11 554.5 6.3 554.5T1.5 549Z" fill="#fbfbfa" stroke="#c9c7c2" stroke-width="0.7"/><path d="M1.5 18Q1.5 12.5 6.3 12.5T11 18V537Q11 542.5 6.3 542.5T1.5 537Z" fill="url(#sbg)" stroke="#c4c2bd" stroke-width="0.7"/><path d="M1.5 18Q1.5 12.5 6.3 12.5T11 18V537Q11 542.5 6.3 542.5T1.5 537Z" fill="url(#sbv)"/><path d="M4.6 8.2h3.4l-1.7-2.2z" fill="#6a6864"/><path d="M4.4 546.6h3.8l-1.9 2.4z" fill="#8a8884"/></svg>
<div class="a" style="left:1194px;top:24px;width:1px;height:651px;background:#e4e3e1;"></div>
<div class="a" style="left:57px;top:648.5px;width:1138px;height:1px;background:#e3e2df;"></div>
<span class="t" style="left:61.17px;top:655.00px;font-size:13px;transform:scaleX(0.9891);">Preselected: Unnamed.Compound.Edge131 (-4.444983,27.114367,-3.500000)</span>
<span class="t" style="left:1084.05px;top:656.00px;font-size:13px;transform:scaleX(0.9769);">120.29 x 81.00 mm</span>
</body></html>
